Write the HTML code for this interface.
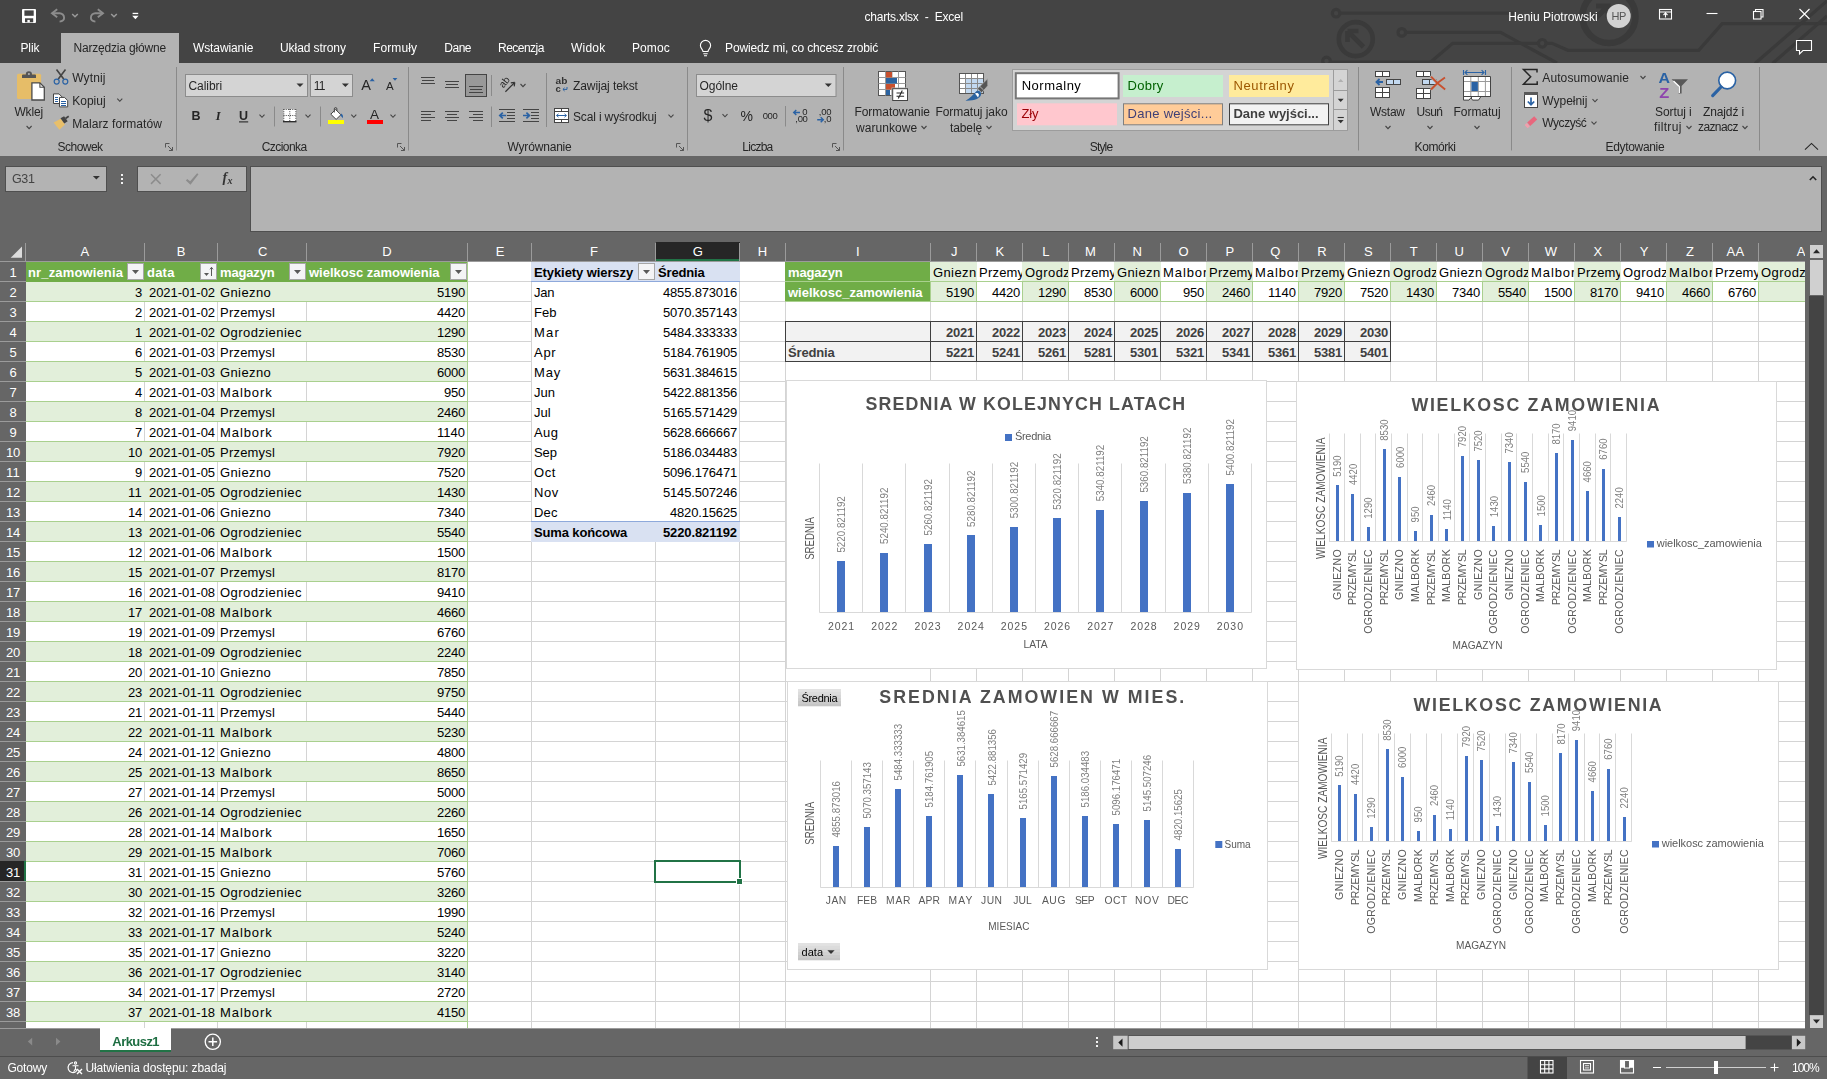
<!DOCTYPE html>
<html lang="pl"><head><meta charset="utf-8"><title>charts.xlsx - Excel</title>
<style>
html,body{margin:0;padding:0}
body{width:1827px;height:1079px;overflow:hidden;position:relative;background:#666;font-family:"Liberation Sans",sans-serif;font-size:12px}
div,span.t,svg{position:absolute;display:block}
span.t{white-space:pre}
svg{overflow:hidden}
.g{left:0;top:0;width:1827px;height:1079px;will-change:transform}
</style></head><body>
<div class="g" style="height:242px"><div style="left:0px;top:0px;width:1827px;height:63px;background:#444444;"></div><svg style="left:0px;top:0px;" width="1827" height="63" viewBox="0 0 1827 63"><g fill="none" stroke="#3a3a3a" stroke-width="3.2"><circle cx="1336.1" cy="13.2" r="3.8"/><path d="M1340 13.2H1514"/><circle cx="1355.8" cy="39.1" r="17" stroke-width="4.6"/><path d="M1347.500 31l16 16M1347.500 31v11M1347.500 31h11" stroke-width="4.600"/><circle cx="1401.8" cy="32.4" r="3.8"/><path d="M1405.800 32.400H1500.500L1557 63"/><path d="M1429 63.500L1452.700 43.400H1538.400"/><circle cx="1542.2" cy="43.3" r="3.8"/><path d="M1546 43.300H1552L1568 50.300H1698.700L1722.200 23.600H1827"/><circle cx="1326.500" cy="61" r="3.800"/><path d="M1330.500 62H1440"/><circle cx="1609" cy="16.500" r="26.500" stroke-width="6.500"/><path d="M1596 6h12v12M1608 6l-14 14" stroke-width="5"/><path d="M1755 63.500L1827 1"/><path d="M1772.500 63.500L1827 16" /></g></svg><div style="left:61px;top:33px;width:118px;height:30px;background:#b3b3b3;"></div><div style="left:0px;top:63px;width:1827px;height:93px;background:#b3b3b3;"></div><svg style="left:0px;top:0px;" width="1827" height="63" viewBox="0 0 1827 63"><rect x="22" y="9" width="14" height="14" rx="1" fill="#fff"/><rect x="24.4" y="10.400" width="9.300" height="5.400" fill="#444"/><rect x="25" y="18.300" width="8.200" height="4" fill="#444"/><rect x="27.400" y="19.900" width="2.400" height="2.400" fill="#fff"/><g fill="none" stroke="#8c8c8c" stroke-width="1.900"><path d="M52 13.200h7.600a4.500 4.500 0 0 1 4.500 4.500c0 2.200-1.700 3.600-4.500 3.900"/><path d="M57.200 9.200l-5.200 4 5.200 4"/><path d="M103 13.200h-7.600a4.500 4.500 0 0 0-4.500 4.500c0 2.200 1.700 3.600 4.500 3.900"/><path d="M97.800 9.200l5.200 4-5.200 4"/></g><path d="M72.2 14.0L75.0 16.8L77.8 14.0" fill="none" stroke="#9a9a9a" stroke-width="1.5"/><path d="M111.2 14.0L114.0 16.8L116.8 14.0" fill="none" stroke="#9a9a9a" stroke-width="1.5"/><rect x="132.600" y="12.800" width="5.600" height="1.300" fill="#fff"/><path d="M132.200 15.800h6.400l-3.200 3.500z" fill="#fff"/><g fill="none" stroke="#fff" stroke-width="1.1"><rect x="1659.5" y="9.5" width="12" height="9.5"/><path d="M1659.5 12h12M1665.5 17.5v-4M1663.5 15l2-2 2 2"/><path d="M1706.5 13.5h11"/><rect x="1753.5" y="11.5" width="7.5" height="7.5"/><path d="M1755.5 11.5v-2h7.5v7.5h-2"/><path d="M1799.5 9l10 10M1809.5 9l-10 10"/><path d="M1796.5 40.5h15v10h-8.5l-3.5 3.5v-3.5h-3z"/></g><g fill="none" stroke="#fff" stroke-width="1.1"><path d="M703 51.5c0-2-2.6-3-2.6-6a5.1 5.1 0 0 1 10.2 0c0 3-2.6 4-2.6 6z"/><path d="M703.3 53.7h4.4M704 55.7h3"/></g><circle cx="1618.7" cy="16" r="12" fill="#d2d2d2"/></svg><span class="t" style="left:1611.45px;top:9.30px;font-size:11px;line-height:14px;color:#555;letter-spacing:-0.390px;">HP</span><span class="t" style="left:864.50px;top:9.30px;font-size:12px;line-height:16px;color:#fff;letter-spacing:-0.231px;">charts.xlsx  -  Excel</span><span class="t" style="left:1508.30px;top:8.80px;font-size:12px;line-height:16px;color:#fff;">Heniu Piotrowski</span><span class="t" style="left:20.50px;top:40.00px;font-size:12px;line-height:16px;color:#fff;letter-spacing:-0.134px;">Plik</span><span class="t" style="left:73.40px;top:40.00px;font-size:12px;line-height:16px;color:#262626;letter-spacing:-0.174px;">Narzędzia główne</span><span class="t" style="left:193.00px;top:40.00px;font-size:12px;line-height:16px;color:#fff;letter-spacing:-0.105px;">Wstawianie</span><span class="t" style="left:280.00px;top:40.00px;font-size:12px;line-height:16px;color:#fff;letter-spacing:-0.066px;">Układ strony</span><span class="t" style="left:373.00px;top:40.00px;font-size:12px;line-height:16px;color:#fff;letter-spacing:0.095px;">Formuły</span><span class="t" style="left:444.30px;top:40.00px;font-size:12px;line-height:16px;color:#fff;letter-spacing:-0.497px;">Dane</span><span class="t" style="left:498.00px;top:40.00px;font-size:12px;line-height:16px;color:#fff;letter-spacing:-0.528px;">Recenzja</span><span class="t" style="left:571.00px;top:40.00px;font-size:12px;line-height:16px;color:#fff;letter-spacing:0.212px;">Widok</span><span class="t" style="left:632.00px;top:40.00px;font-size:12px;line-height:16px;color:#fff;letter-spacing:0.070px;">Pomoc</span><span class="t" style="left:725.00px;top:40.00px;font-size:12px;line-height:16px;color:#fff;letter-spacing:-0.126px;">Powiedz mi, co chcesz zrobić</span><svg style="left:0px;top:0px;" width="1827" height="160" viewBox="0 0 1827 160"><path d="M176.5 67V150.5" stroke="#8a8a8a" stroke-width="1"/><path d="M408.5 67V150.5" stroke="#8a8a8a" stroke-width="1"/><path d="M687.5 67V150.5" stroke="#8a8a8a" stroke-width="1"/><path d="M843.5 67V150.5" stroke="#8a8a8a" stroke-width="1"/><path d="M1358.5 67V150.5" stroke="#8a8a8a" stroke-width="1"/><path d="M1511.5 67V150.5" stroke="#8a8a8a" stroke-width="1"/><path d="M1759.5 67V150.5" stroke="#8a8a8a" stroke-width="1"/><path d="M165.5 147.5v-4h4" fill="none" stroke="#555" stroke-width="1"/><path d="M168 146l4.5 4.5M172.5 147v3.5h-3.5" fill="none" stroke="#555" stroke-width="1"/><path d="M397.5 147.5v-4h4" fill="none" stroke="#555" stroke-width="1"/><path d="M400 146l4.5 4.5M404.5 147v3.5h-3.5" fill="none" stroke="#555" stroke-width="1"/><path d="M676.5 147.5v-4h4" fill="none" stroke="#555" stroke-width="1"/><path d="M679 146l4.5 4.5M683.5 147v3.5h-3.5" fill="none" stroke="#555" stroke-width="1"/><path d="M832.5 147.5v-4h4" fill="none" stroke="#555" stroke-width="1"/><path d="M835 146l4.5 4.5M839.5 147v3.5h-3.5" fill="none" stroke="#555" stroke-width="1"/><rect x="17" y="73.7" width="24.1" height="25.3" rx="1.6" fill="#e6bd68"/><path d="M22 78v-2.600a1 1 0 0 1 1-1h2.800a3.100 3.100 0 0 1 6.200 0h3a1 1 0 0 1 1 1v2.600z" fill="#555"/><circle cx="28.9" cy="74" r="1.050" fill="#b3b3b3"/><path d="M31.900 82.900h8l4.400 4.400v12.700h-12.400z" fill="#fff" stroke="#4a4a4a" stroke-width="1.300"/><path d="M39.900 82.900v4.400h4.400" fill="none" stroke="#4a4a4a" stroke-width="1.100"/><path d="M26.6 126.0L29.1 128.6L31.6 126.0" fill="none" stroke="#444" stroke-width="1.1"/><path d="M56.5 69.5l7.2 9.6M65.5 69.5l-7.2 9.6" stroke="#444" stroke-width="1.6" fill="none"/><circle cx="56.7" cy="81.6" r="2.5" fill="none" stroke="#2a62a4" stroke-width="1.2"/><circle cx="65.3" cy="81.6" r="2.5" fill="none" stroke="#2a62a4" stroke-width="1.2"/><path d="M53.5 93.9h5.5l3 3v6.6h-8.5z" fill="#fff" stroke="#444" stroke-width="1"/><path d="M59.5 97.4h5l3.2 3.2v6.3h-8.2z" fill="#fff" stroke="#444" stroke-width="1"/><path d="M55 97.5h3M55 99.5h3M55 101.5h3M61 101.5h5M61 103.5h5M61 105.5h5" stroke="#2a62a4" stroke-width="1"/><path d="M117.3 98.7L119.8 101.3L122.3 98.7" fill="none" stroke="#444" stroke-width="1.1"/><path d="M53.6 122.6l7.2-3.8 4.2 5.6-5.6 5.4z" fill="#e8bf6a"/><path d="M60.5 118.2l3.6-2 3.6 5-3.4 2.4z" fill="#444"/><path d="M65 117.8l3.2-2.2 1 1.4-3.2 2.2z" fill="#444"/><rect x="185.5" y="74.5" width="122" height="22" fill="#d4d4d4" stroke="#8c8c8c"/><rect x="310.5" y="74.5" width="42" height="22" fill="#d4d4d4" stroke="#8c8c8c"/><path d="M296.5 83.5h7.0L300.0 87.1z" fill="#333"/><path d="M341.9 83.5h7.0L345.4 87.1z" fill="#333"/><path d="M369.6 81.2l2.6-3 2.6 3z" fill="#2a62a4"/><path d="M392.6 78l2.4 2.8 2.4-2.8z" fill="#2a62a4"/><path d="M239 121.9h9.2" stroke="#262626" stroke-width="1.1"/><path d="M259.5 114.7L262.0 117.3L264.5 114.7" fill="none" stroke="#444" stroke-width="1.1"/><path d="M305.5 114.7L308.0 117.3L310.5 114.7" fill="none" stroke="#444" stroke-width="1.1"/><path d="M351.3 114.7L353.8 117.3L356.3 114.7" fill="none" stroke="#444" stroke-width="1.1"/><path d="M390.5 114.7L393.0 117.3L395.5 114.7" fill="none" stroke="#444" stroke-width="1.1"/><path d="M274.5 106.5V126.5" stroke="#8a8a8a" stroke-width="1"/><path d="M320.5 106.5V126.5" stroke="#8a8a8a" stroke-width="1"/><rect x="283.5" y="109" width="12.5" height="12" fill="#fff"/><path d="M283.5 109.5h12.5M283.5 115.5h12.5M283.8 109v12M289.8 109v12M295.8 109v12" stroke="#444" stroke-width="1" stroke-dasharray="1 1.2" fill="none"/><path d="M283 121.7h13.5" stroke="#262626" stroke-width="1.3"/><rect x="328" y="120" width="16" height="4" fill="#ffff00"/><path d="M335.6 109.5l5.3 5.3-4.8 4.6-5.3-5.2z" fill="#fff" stroke="#444" stroke-width="1"/><path d="M334.3 112.5v-3.6a1.3 1.3 0 0 1 2.6 0v2" fill="none" stroke="#444" stroke-width="1"/><path d="M341.3 113.6c1.6 1 2 3 1.6 4.6c-.8-1.2-1.6-1.6-2.6-2.4z" fill="#2a62a4"/><rect x="367" y="120" width="16" height="4" fill="#ff0000"/><path d="M421 77.5H435" stroke="#444" stroke-width="1"/><path d="M422 80.5H434" stroke="#444" stroke-width="1"/><path d="M421 83.5H435" stroke="#444" stroke-width="1"/><path d="M445 81.5H459" stroke="#444" stroke-width="1"/><path d="M446 84.5H458" stroke="#444" stroke-width="1"/><path d="M445 87.5H459" stroke="#444" stroke-width="1"/><rect x="465.5" y="74.5" width="21" height="22" fill="#999" stroke="#444"/><path d="M469 86.5H483" stroke="#444" stroke-width="1"/><path d="M470 89.5H482" stroke="#444" stroke-width="1"/><path d="M469 92.5H483" stroke="#444" stroke-width="1"/><path d="M491.5 75V96" stroke="#8a8a8a" stroke-width="1"/><path d="M491.5 106.5V127" stroke="#8a8a8a" stroke-width="1"/><path d="M546.5 73V127" stroke="#8a8a8a" stroke-width="1"/><path d="M421 111.5H435" stroke="#444" stroke-width="1"/><path d="M445 111.5H459" stroke="#444" stroke-width="1"/><path d="M469 111.5H483" stroke="#444" stroke-width="1"/><path d="M421 114.5H431" stroke="#444" stroke-width="1"/><path d="M447 114.5H457" stroke="#444" stroke-width="1"/><path d="M473 114.5H483" stroke="#444" stroke-width="1"/><path d="M421 117.5H435" stroke="#444" stroke-width="1"/><path d="M445 117.5H459" stroke="#444" stroke-width="1"/><path d="M469 117.5H483" stroke="#444" stroke-width="1"/><path d="M421 120.5H431" stroke="#444" stroke-width="1"/><path d="M447 120.5H457" stroke="#444" stroke-width="1"/><path d="M473 120.5H483" stroke="#444" stroke-width="1"/><path d="M505.4 91.7L514.6 82.6M514.8 82.3l-4 .6M514.8 82.3l-.6 4" stroke="#333" stroke-width="1.2" fill="none"/><text x="0" y="0" transform="translate(503.5 88.6) rotate(-52)" font-size="10" fill="#262626" font-family="Liberation Sans,sans-serif">ab</text><path d="M520.5 84.0L523.0 86.6L525.5 84.0" fill="none" stroke="#444" stroke-width="1.1"/><path d="M499 109.5H515" stroke="#444" stroke-width="1"/><path d="M499 121.5H515" stroke="#444" stroke-width="1"/><path d="M507 112.5H515" stroke="#444" stroke-width="1"/><path d="M507 115.5H515" stroke="#444" stroke-width="1"/><path d="M507 118.5H515" stroke="#444" stroke-width="1"/><path d="M523 109.5H539" stroke="#444" stroke-width="1"/><path d="M523 121.5H539" stroke="#444" stroke-width="1"/><path d="M531 112.5H539" stroke="#444" stroke-width="1"/><path d="M531 115.5H539" stroke="#444" stroke-width="1"/><path d="M531 118.5H539" stroke="#444" stroke-width="1"/><path d="M499.6 115.5h6.6M502.8 112.6l-3 2.9 3 2.9" stroke="#2a62a4" stroke-width="1.7" fill="none"/><path d="M523 115.5h6.6M526.4 112.6l3 2.9-3 2.9" stroke="#2a62a4" stroke-width="1.7" fill="none"/><text x="555.6" y="84" font-size="9.5" font-weight="bold" fill="#333" font-family="Liberation Sans,sans-serif" textLength="11.8" lengthAdjust="spacingAndGlyphs">ab</text><text x="555.6" y="91.5" font-size="9.5" font-weight="bold" fill="#333" font-family="Liberation Sans,sans-serif">c</text><path d="M567 87v2.4h-4M564.6 87.8l-1.7 1.6 1.7 1.6" stroke="#2a62a4" stroke-width="1" fill="none"/><rect x="554.5" y="108.5" width="14" height="14" fill="#fff" stroke="#444"/><path d="M554.5 111.5h14M554.5 119.5h14M561.5 108.5v3M561.5 119.5v3" stroke="#444" fill="none"/><path d="M556.6 115.5h9.8M558.5 113.8l-1.9 1.7 1.9 1.7M564.5 113.8l1.9 1.7-1.9 1.7" stroke="#2a62a4" stroke-width="1" fill="none"/><path d="M668.5 114.7L671.0 117.3L673.5 114.7" fill="none" stroke="#444" stroke-width="1.1"/><rect x="696.5" y="74.5" width="139.5" height="22" fill="#d4d4d4" stroke="#8c8c8c"/><path d="M824.8 83.5h7.0L828.3 87.1z" fill="#333"/><path d="M722.5 114.2L725.0 116.8L727.5 114.2" fill="none" stroke="#444" stroke-width="1.1"/><path d="M785.5 106V126.5" stroke="#8a8a8a" stroke-width="1"/><path d="M800 112.500h-6.500M796.300 110l-2.600 2.500 2.600 2.500" stroke="#2a62a4" stroke-width="1.400" fill="none"/><path d="M817.200 119.700h6M820.700 117.200l2.600 2.500-2.600 2.500" stroke="#2a62a4" stroke-width="1.400" fill="none"/><rect x="878.5" y="71.5" width="27" height="24" fill="#fff" stroke="#555"/><path d="M878.5 77.5h27M878.5 83.5h27M878.5 89.5h27M885.5 71.5v24M892 71.5v24M898.5 71.5v24" stroke="#9a9a9a" stroke-width="1" fill="none"/><rect x="886" y="72" width="6" height="5.5" fill="#c8502e"/><rect x="886" y="78" width="11" height="5.5" fill="#2b63a0"/><rect x="886" y="84" width="9" height="5.5" fill="#c8502e"/><rect x="886" y="90" width="4" height="5" fill="#2b63a0"/><rect x="891.5" y="87.5" width="17" height="14" fill="#b3b3b3"/><rect x="892.7" y="88.7" width="14.8" height="11.8" fill="#fff" stroke="#444"/><path d="M896.5 93h7.6M896.5 96.2h7.6M902.3 90.6l-4 8" stroke="#262626" stroke-width="1.1" fill="none"/><path d="M921.5 126.0L924.0 128.6L926.5 126.0" fill="none" stroke="#444" stroke-width="1.1"/><path d="M986.5 126.0L989.0 128.6L991.5 126.0" fill="none" stroke="#444" stroke-width="1.1"/><rect x="959.5" y="73.5" width="24" height="20" fill="#fff" stroke="#555"/><rect x="966" y="79" width="17.5" height="14.5" fill="#c3d9f0"/><path d="M959.5 78.5h24M959.5 83.5h24M959.5 88.5h24M965.5 73.5v20M971.5 73.5v20M977.5 73.5v20" stroke="#8a8a8a" stroke-width="1" fill="none"/><rect x="959.5" y="73.5" width="24" height="20" fill="none" stroke="#555"/><path d="M977.4 88.8L987.8 78.6v7.2l-6.200 7z" fill="#555" stroke="#b3b3b3" stroke-width=".8"/><path d="M979.800 86.400l3.800 3.600" stroke="#b3b3b3" stroke-width="1"/><path d="M976.3 91.200c2.600-1.200 5.200.8 4.800 3.400c-.6 3.800-6.200 6.400-15.600 6.200 4.600-2.400 7.200-6 10.800-9.600z" fill="#2b63a0"/><path d="M975 93.600c1.400-1.200 3.600-.6 4 1.200l-.9 2.600z" fill="#fff"/><rect x="1012.5" y="69.5" width="335" height="61" fill="#d4d4d4" stroke="#9c9c9c"/><rect x="1015.8" y="73.2" width="102.8" height="25.2" fill="#fff" stroke="#767676" stroke-width="2"/><rect x="1123" y="75" width="100" height="22" fill="#c6efce"/><rect x="1229" y="75" width="100" height="22" fill="#ffeb9c"/><rect x="1017" y="103.3" width="100" height="22" fill="#ffc7ce"/><rect x="1123.5" y="103.8" width="99" height="21" fill="#ffcc99" stroke="#7f7f7f"/><rect x="1229.5" y="103.8" width="99" height="21" fill="#f2f2f2" stroke="#3f3f3f"/><path d="M1333.5 69.5v61M1333.5 90.5h14M1333.5 109.5h14" stroke="#9c9c9c" fill="none"/><path d="M1338 82l2.7-3 2.7 3z" fill="#b0b0b0"/><path d="M1337.7 98.8h6L1340.7 102.0z" fill="#333"/><path d="M1337.6 117.5h6.2" stroke="#333" stroke-width="1.1"/><path d="M1337.7 120.0h6L1340.7 123.2z" fill="#333"/><rect x="1375.5" y="71.5" width="14" height="5" fill="#fff" stroke="#444" stroke-width="1"/><path d="M1382.5 71.5v5" stroke="#444"/><rect x="1375.5" y="87.5" width="14" height="10" fill="#fff" stroke="#444" stroke-width="1"/><path d="M1382.5 87.5v10" stroke="#444"/><path d="M1375.5 92.5h14" stroke="#444"/><rect x="1386.5" y="79.5" width="14" height="5" fill="#c3d9f0" stroke="#444" stroke-width="1"/><path d="M1393.5 79.5v5" stroke="#444"/><path d="M1383 82h-6.600M1379.600 79l-3.100 3 3.100 3" stroke="#2a62a4" stroke-width="1.900" fill="none"/><rect x="1416.5" y="71.5" width="14" height="5" fill="#fff" stroke="#444" stroke-width="1"/><path d="M1423.5 71.5v5" stroke="#444"/><rect x="1416.5" y="88.5" width="14" height="10" fill="#fff" stroke="#444" stroke-width="1"/><path d="M1423.5 88.5v10" stroke="#444"/><path d="M1416.5 93.5h14" stroke="#444"/><rect x="1422.5" y="79.5" width="14" height="5" fill="#c3d9f0" stroke="#444" stroke-width="1"/><path d="M1429.5 79.5v5" stroke="#444"/><path d="M1430.400 76l15.600 14.600M1431 90.400l14.600-13.400" stroke="#b3b3b3" stroke-width="3.600" fill="none"/><path d="M1431 76.700c4 4.500 9 9 14.200 12.800M1445 77.500c-5 3-10 7.500-14 12" stroke="#c8502e" stroke-width="2" fill="none"/><path d="M1463.500 76.500h27v20h-9.500l-2.500 3.600h-6l-1.500-2.400-2 2.400h-5.500z" fill="#fff" stroke="#444"/><path d="M1463.500 96.500h27M1471.500 96.500v2" stroke="#444" fill="none"/><path d="M1464 81.500h26M1464 91.500h26M1470.800 77v19M1478.300 77v19M1485.400 77v19" stroke="#9a9a9a" stroke-width="1" fill="none"/><rect x="1471.400" y="82" width="6.500" height="9" fill="#2a62a4"/><path d="M1465 72.500h19M1463.500 70v5M1485.500 70v5M1467.400 70.200l-2.400 2.300 2.400 2.300M1481.600 70.200l2.400 2.300-2.400 2.300" stroke="#2a62a4" stroke-width="1.100" fill="none"/><path d="M1385.5 126.0L1388.0 128.6L1390.5 126.0" fill="none" stroke="#444" stroke-width="1.1"/><path d="M1427.5 126.0L1430.0 128.6L1432.5 126.0" fill="none" stroke="#444" stroke-width="1.1"/><path d="M1474.5 126.0L1477.0 128.6L1479.5 126.0" fill="none" stroke="#444" stroke-width="1.1"/><path d="M1537 72.5v-3h-13.5l7.2 7.3-7.2 7.4h13.7v-3" fill="none" stroke="#262626" stroke-width="1.5"/><path d="M1640.5 76.0L1643.0 78.6L1645.5 76.0" fill="none" stroke="#444" stroke-width="1.1"/><path d="M1592.5 99.2L1595.0 101.8L1597.5 99.2" fill="none" stroke="#444" stroke-width="1.1"/><path d="M1591.5 121.7L1594.0 124.3L1596.5 121.7" fill="none" stroke="#444" stroke-width="1.1"/><rect x="1524.5" y="92.5" width="13" height="15" fill="#fff" stroke="#444"/><rect x="1524" y="92" width="14" height="3" fill="#595959"/><path d="M1531 97.5v7M1527.8 101.5l3.2 3.2 3.2-3.2" stroke="#2a62a4" stroke-width="1.7" fill="none"/><path d="M1527.2 122.6l7-6.4 3 3.3-7 6.4z" fill="#e8677d"/><path d="M1524.6 125l2.2-2 3 3.3-2.2 2z" fill="#f0a0ad"/><text x="1658.6" y="83.3" font-size="15.5" font-weight="bold" fill="#2a62a4" font-family="Liberation Sans,sans-serif" textLength="11.5" lengthAdjust="spacingAndGlyphs">A</text><text x="1659.3" y="97.6" font-size="15.5" font-weight="bold" fill="#8e44ad" font-family="Liberation Sans,sans-serif" textLength="10" lengthAdjust="spacingAndGlyphs">Z</text><path d="M1671.6 79.3h16.4l-6.4 6.8v7.4h-3v-7.4z" fill="#595959"/><path d="M1673.5 81l5.8 5.6v6.4" fill="none" stroke="#fff" stroke-width="1.3"/><circle cx="1727.2" cy="80.5" r="8.4" fill="#fff" stroke="#2a62a4" stroke-width="1.6"/><path d="M1721 87l-8.3 8.6" stroke="#2a62a4" stroke-width="3.2" stroke-linecap="round"/><path d="M1686.5 126.0L1689.0 128.6L1691.5 126.0" fill="none" stroke="#444" stroke-width="1.1"/><path d="M1742.5 126.0L1745.0 128.6L1747.5 126.0" fill="none" stroke="#444" stroke-width="1.1"/><path d="M1805 149.6l6.5-6.2 6.5 6.2" fill="none" stroke="#262626" stroke-width="1.1"/></svg><span class="t" style="left:14.40px;top:103.70px;font-size:12px;line-height:16px;color:#262626;letter-spacing:-0.146px;">Wklej</span><span class="t" style="left:72.20px;top:69.60px;font-size:12px;line-height:16px;color:#262626;letter-spacing:0.140px;">Wytnij</span><span class="t" style="left:72.20px;top:92.60px;font-size:12px;line-height:16px;color:#262626;letter-spacing:0.007px;">Kopiuj</span><span class="t" style="left:72.20px;top:115.60px;font-size:12px;line-height:16px;color:#262626;letter-spacing:0.074px;">Malarz formatów</span><span class="t" style="left:57.50px;top:139.00px;font-size:12px;line-height:16px;color:#262626;letter-spacing:-0.513px;">Schowek</span><span class="t" style="left:261.70px;top:139.00px;font-size:12px;line-height:16px;color:#262626;letter-spacing:-0.557px;">Czcionka</span><span class="t" style="left:507.50px;top:139.00px;font-size:12px;line-height:16px;color:#262626;letter-spacing:-0.182px;">Wyrównanie</span><span class="t" style="left:742.30px;top:139.00px;font-size:12px;line-height:16px;color:#262626;letter-spacing:-0.748px;">Liczba</span><span class="t" style="left:1089.70px;top:139.00px;font-size:12px;line-height:16px;color:#262626;letter-spacing:-0.816px;">Style</span><span class="t" style="left:1414.60px;top:139.00px;font-size:12px;line-height:16px;color:#262626;letter-spacing:-0.430px;">Komórki</span><span class="t" style="left:1605.50px;top:139.00px;font-size:12px;line-height:16px;color:#262626;letter-spacing:-0.324px;">Edytowanie</span><span class="t" style="left:188.50px;top:77.50px;font-size:12px;line-height:16px;color:#262626;letter-spacing:-0.073px;">Calibri</span><span class="t" style="left:313.70px;top:77.50px;font-size:12px;line-height:16px;color:#262626;letter-spacing:-0.729px;">11</span><span class="t" style="left:361.30px;top:76.30px;font-size:14.5px;line-height:19px;color:#262626;letter-spacing:0.129px;">A</span><span class="t" style="left:386.00px;top:79.30px;font-size:11.5px;line-height:15px;color:#262626;letter-spacing:0.129px;">A</span><span class="t" style="left:191.60px;top:107.50px;font-size:12.5px;line-height:16px;color:#262626;letter-spacing:-1.027px;font-weight:bold;">B</span><span class="t" style="left:215.80px;top:107.50px;font-size:12.5px;line-height:16px;color:#262626;letter-spacing:1.527px;font-weight:bold;font-style:italic;font-family:'Liberation Serif',serif;">I</span><span class="t" style="left:239.00px;top:107.50px;font-size:12.5px;line-height:16px;color:#262626;letter-spacing:-0.027px;font-weight:bold;">U</span><span class="t" style="left:370.00px;top:105.50px;font-size:13.5px;line-height:18px;color:#262626;letter-spacing:0.995px;">A</span><span class="t" style="left:573.00px;top:78.00px;font-size:12px;line-height:16px;color:#262626;letter-spacing:-0.094px;">Zawijaj tekst</span><span class="t" style="left:573.00px;top:108.80px;font-size:12px;line-height:16px;color:#262626;letter-spacing:-0.152px;">Scal i wyśrodkuj</span><span class="t" style="left:699.50px;top:77.70px;font-size:12px;line-height:16px;color:#262626;letter-spacing:-0.033px;">Ogólne</span><span class="t" style="left:703.60px;top:105.00px;font-size:16px;line-height:21px;color:#262626;letter-spacing:-0.899px;">$</span><span class="t" style="left:740.50px;top:107.20px;font-size:14px;line-height:18px;color:#262626;letter-spacing:-0.248px;">%</span><span class="t" style="left:762.80px;top:109.50px;font-size:9.5px;line-height:12px;color:#262626;letter-spacing:-0.483px;">000</span><span class="t" style="left:802.20px;top:105.90px;font-size:9.5px;line-height:12px;color:#262626;letter-spacing:-0.083px;">0</span><span class="t" style="left:795.30px;top:112.90px;font-size:9.5px;line-height:12px;color:#262626;letter-spacing:-0.302px;">,00</span><span class="t" style="left:818.80px;top:105.90px;font-size:9.5px;line-height:12px;color:#262626;letter-spacing:-0.269px;">,00</span><span class="t" style="left:823.80px;top:112.90px;font-size:9.5px;line-height:12px;color:#262626;letter-spacing:-0.261px;">,0</span><span class="t" style="left:854.40px;top:103.50px;font-size:12px;line-height:16px;color:#262626;letter-spacing:-0.036px;">Formatowanie</span><span class="t" style="left:856.00px;top:119.60px;font-size:12px;line-height:16px;color:#262626;letter-spacing:0.067px;">warunkowe</span><span class="t" style="left:935.40px;top:103.50px;font-size:12px;line-height:16px;color:#262626;letter-spacing:-0.038px;">Formatuj jako</span><span class="t" style="left:950.00px;top:119.60px;font-size:12px;line-height:16px;color:#262626;letter-spacing:-0.116px;">tabelę</span><span class="t" style="left:1021.70px;top:77.00px;font-size:13px;line-height:17px;color:#000;letter-spacing:0.509px;">Normalny</span><span class="t" style="left:1127.50px;top:77.00px;font-size:13px;line-height:17px;color:#006100;letter-spacing:0.264px;">Dobry</span><span class="t" style="left:1233.50px;top:77.00px;font-size:13px;line-height:17px;color:#9c5700;letter-spacing:0.596px;">Neutralny</span><span class="t" style="left:1021.50px;top:105.00px;font-size:13px;line-height:17px;color:#9c0006;letter-spacing:-0.110px;">Zły</span><span class="t" style="left:1127.50px;top:105.00px;font-size:13px;line-height:17px;color:#3f3f76;letter-spacing:0.291px;">Dane wejści...</span><span class="t" style="left:1233.50px;top:105.00px;font-size:13px;line-height:17px;color:#3f3f3f;letter-spacing:-0.019px;font-weight:bold;">Dane wyjści...</span><span class="t" style="left:1370.00px;top:103.70px;font-size:12px;line-height:16px;color:#262626;letter-spacing:-0.260px;">Wstaw</span><span class="t" style="left:1416.60px;top:103.70px;font-size:12px;line-height:16px;color:#262626;letter-spacing:-0.553px;">Usuń</span><span class="t" style="left:1453.60px;top:103.70px;font-size:12px;line-height:16px;color:#262626;letter-spacing:-0.056px;">Formatuj</span><span class="t" style="left:1542.30px;top:69.60px;font-size:12px;line-height:16px;color:#262626;letter-spacing:0.101px;">Autosumowanie</span><span class="t" style="left:1542.30px;top:92.50px;font-size:12px;line-height:16px;color:#262626;letter-spacing:-0.018px;">Wypełnij</span><span class="t" style="left:1542.30px;top:115.00px;font-size:12px;line-height:16px;color:#262626;letter-spacing:-0.460px;">Wyczyść</span><span class="t" style="left:1655.00px;top:103.70px;font-size:12px;line-height:16px;color:#262626;letter-spacing:-0.081px;">Sortuj i</span><span class="t" style="left:1654.00px;top:119.20px;font-size:12px;line-height:16px;color:#262626;letter-spacing:0.338px;">filtruj</span><span class="t" style="left:1703.00px;top:103.70px;font-size:12px;line-height:16px;color:#262626;letter-spacing:-0.127px;">Znajdź i</span><span class="t" style="left:1698.00px;top:119.20px;font-size:12px;line-height:16px;color:#262626;letter-spacing:-0.603px;">zaznacz</span><div style="left:0px;top:156px;width:1827px;height:86px;background:#666666;"></div><svg style="left:0px;top:160px;" width="1827" height="80" viewBox="0 160 1827 80"><rect x="5.5" y="166.5" width="101" height="25" fill="#b3b3b3" stroke="#4f4f4f"/><rect x="137.5" y="166.5" width="109" height="25" fill="#b3b3b3" stroke="#4f4f4f"/><rect x="250.5" y="166.5" width="1571" height="65" fill="#b3b3b3" stroke="#4f4f4f"/><path d="M92.9 176.0h7L96.4 179.6z" fill="#333"/><rect x="121" y="174" width="2" height="2" fill="#f2f2f2"/><rect x="121" y="178" width="2" height="2" fill="#f2f2f2"/><rect x="121" y="182" width="2" height="2" fill="#f2f2f2"/><path d="M151 174.3l9.6 9.6M160.6 174.3l-9.6 9.6" stroke="#8c8c8c" stroke-width="1.5" fill="none"/><path d="M185.900 180.400l1.300-1.500 2.900 2.400 7-8 1.400 1-8 10.500z" fill="#8c8c8c"/><path d="M1809.8 180l3.2-3.2 3.2 3.2" stroke="#262626" stroke-width="1.6" fill="none"/></svg><span class="t" style="left:12.00px;top:171.40px;font-size:12.5px;line-height:16px;color:#444;letter-spacing:-0.376px;">G31</span><span class="t" style="left:222.60px;top:169.20px;font-size:14px;line-height:18px;color:#333;letter-spacing:0.838px;font-weight:bold;font-style:italic;font-family:'Liberation Serif',serif;">f</span><span class="t" style="left:227.60px;top:174.20px;font-size:10px;line-height:13px;color:#333;letter-spacing:-0.062px;font-weight:bold;font-style:italic;font-family:'Liberation Serif',serif;">x</span></div><div style="left:0px;top:242px;width:1827px;height:20px;background:#666666;"></div><div style="left:0px;top:261px;width:1805px;height:1px;background:#9b9b9b;"></div><div style="left:656px;top:242px;width:84px;height:18px;background:#262626;"></div><div style="left:656px;top:259px;width:84px;height:2px;background:#217346;"></div><svg style="left:0px;top:242px;" width="1806" height="20" viewBox="0 242 1806 20"><path d="M22 246.5v11.3h-11.3z" fill="#dcdcdc"/><path d="M25.5 243v18" stroke="#9b9b9b"/><path d="M144.5 243v18" stroke="#9b9b9b"/><path d="M217.5 243v18" stroke="#9b9b9b"/><path d="M306.5 243v18" stroke="#9b9b9b"/><path d="M467.5 243v18" stroke="#9b9b9b"/><path d="M531.5 243v18" stroke="#9b9b9b"/><path d="M655.5 243v18" stroke="#9b9b9b"/><path d="M739.5 243v18" stroke="#9b9b9b"/><path d="M785.5 243v18" stroke="#9b9b9b"/><path d="M930.5 243v18" stroke="#9b9b9b"/><path d="M976.5 243v18" stroke="#9b9b9b"/><path d="M1022.5 243v18" stroke="#9b9b9b"/><path d="M1068.5 243v18" stroke="#9b9b9b"/><path d="M1114.5 243v18" stroke="#9b9b9b"/><path d="M1160.5 243v18" stroke="#9b9b9b"/><path d="M1206.5 243v18" stroke="#9b9b9b"/><path d="M1252.5 243v18" stroke="#9b9b9b"/><path d="M1298.5 243v18" stroke="#9b9b9b"/><path d="M1344.5 243v18" stroke="#9b9b9b"/><path d="M1390.5 243v18" stroke="#9b9b9b"/><path d="M1436.5 243v18" stroke="#9b9b9b"/><path d="M1482.5 243v18" stroke="#9b9b9b"/><path d="M1528.5 243v18" stroke="#9b9b9b"/><path d="M1574.5 243v18" stroke="#9b9b9b"/><path d="M1620.5 243v18" stroke="#9b9b9b"/><path d="M1666.5 243v18" stroke="#9b9b9b"/><path d="M1712.5 243v18" stroke="#9b9b9b"/><path d="M1758.5 243v18" stroke="#9b9b9b"/></svg><span class="t" style="left:80.54px;top:242.50px;font-size:13px;line-height:17px;color:#fff;letter-spacing:0.240px;">A</span><span class="t" style="left:176.81px;top:242.50px;font-size:13px;line-height:17px;color:#fff;letter-spacing:-0.294px;">B</span><span class="t" style="left:257.89px;top:242.50px;font-size:13px;line-height:17px;color:#fff;letter-spacing:-1.177px;">C</span><span class="t" style="left:382.26px;top:242.50px;font-size:13px;line-height:17px;color:#fff;letter-spacing:0.087px;">D</span><span class="t" style="left:495.74px;top:242.50px;font-size:13px;line-height:17px;color:#fff;letter-spacing:-1.151px;">E</span><span class="t" style="left:589.96px;top:242.50px;font-size:13px;line-height:17px;color:#fff;letter-spacing:-0.865px;">F</span><span class="t" style="left:692.64px;top:242.50px;font-size:13px;line-height:17px;color:#fff;letter-spacing:-0.396px;">G</span><span class="t" style="left:757.70px;top:242.50px;font-size:13px;line-height:17px;color:#fff;letter-spacing:0.207px;">H</span><span class="t" style="left:856.06px;top:242.50px;font-size:13px;line-height:17px;color:#fff;letter-spacing:0.268px;">I</span><span class="t" style="left:951.04px;top:242.50px;font-size:13px;line-height:17px;color:#fff;letter-spacing:-1.590px;">J</span><span class="t" style="left:995.50px;top:242.50px;font-size:13px;line-height:17px;color:#fff;letter-spacing:-0.670px;">K</span><span class="t" style="left:1042.26px;top:242.50px;font-size:13px;line-height:17px;color:#fff;letter-spacing:-0.756px;">L</span><span class="t" style="left:1084.92px;top:242.50px;font-size:13px;line-height:17px;color:#fff;letter-spacing:2.338px;">M</span><span class="t" style="left:1132.53px;top:242.50px;font-size:13px;line-height:17px;color:#fff;letter-spacing:0.553px;">N</span><span class="t" style="left:1178.40px;top:242.50px;font-size:13px;line-height:17px;color:#fff;letter-spacing:0.085px;">O</span><span class="t" style="left:1225.52px;top:242.50px;font-size:13px;line-height:17px;color:#fff;letter-spacing:-0.715px;">P</span><span class="t" style="left:1270.32px;top:242.50px;font-size:13px;line-height:17px;color:#fff;letter-spacing:0.251px;">Q</span><span class="t" style="left:1317.32px;top:242.50px;font-size:13px;line-height:17px;color:#fff;letter-spacing:-1.026px;">R</span><span class="t" style="left:1363.96px;top:242.50px;font-size:13px;line-height:17px;color:#fff;letter-spacing:-1.595px;">S</span><span class="t" style="left:1409.75px;top:242.50px;font-size:13px;line-height:17px;color:#fff;letter-spacing:-0.436px;">T</span><span class="t" style="left:1454.56px;top:242.50px;font-size:13px;line-height:17px;color:#fff;letter-spacing:0.493px;">U</span><span class="t" style="left:1501.13px;top:242.50px;font-size:13px;line-height:17px;color:#fff;letter-spacing:0.067px;">V</span><span class="t" style="left:1544.65px;top:242.50px;font-size:13px;line-height:17px;color:#fff;letter-spacing:1.431px;">W</span><span class="t" style="left:1593.50px;top:242.50px;font-size:13px;line-height:17px;color:#fff;letter-spacing:-0.677px;">X</span><span class="t" style="left:1639.75px;top:242.50px;font-size:13px;line-height:17px;color:#fff;letter-spacing:-1.166px;">Y</span><span class="t" style="left:1685.89px;top:242.50px;font-size:13px;line-height:17px;color:#fff;letter-spacing:-0.730px;">Z</span><span class="t" style="left:1726.59px;top:242.50px;font-size:13px;line-height:17px;color:#fff;letter-spacing:0.240px;">AA</span><div style="left:1759px;top:242px;width:47px;height:19px;overflow:hidden"><span class="t" style="left:37.86px;top:0.50px;font-size:13px;line-height:17px;color:#fff;letter-spacing:-0.027px;">AB</span></div><div style="left:0;top:262px;width:26px;height:766px;overflow:hidden;background:#666666"><div style="left:0px;top:19px;width:26px;height:1px;background:#9b9b9b;"></div><span class="t" style="left:9.50px;top:2.00px;font-size:13px;line-height:17px;color:#fff;letter-spacing:-0.230px;">1</span><div style="left:0px;top:39px;width:26px;height:1px;background:#9b9b9b;"></div><span class="t" style="left:9.50px;top:22.00px;font-size:13px;line-height:17px;color:#fff;letter-spacing:-0.230px;">2</span><div style="left:0px;top:59px;width:26px;height:1px;background:#9b9b9b;"></div><span class="t" style="left:9.50px;top:42.00px;font-size:13px;line-height:17px;color:#fff;letter-spacing:-0.230px;">3</span><div style="left:0px;top:79px;width:26px;height:1px;background:#9b9b9b;"></div><span class="t" style="left:9.50px;top:62.00px;font-size:13px;line-height:17px;color:#fff;letter-spacing:-0.230px;">4</span><div style="left:0px;top:99px;width:26px;height:1px;background:#9b9b9b;"></div><span class="t" style="left:9.50px;top:82.00px;font-size:13px;line-height:17px;color:#fff;letter-spacing:-0.230px;">5</span><div style="left:0px;top:119px;width:26px;height:1px;background:#9b9b9b;"></div><span class="t" style="left:9.50px;top:102.00px;font-size:13px;line-height:17px;color:#fff;letter-spacing:-0.230px;">6</span><div style="left:0px;top:139px;width:26px;height:1px;background:#9b9b9b;"></div><span class="t" style="left:9.50px;top:122.00px;font-size:13px;line-height:17px;color:#fff;letter-spacing:-0.230px;">7</span><div style="left:0px;top:159px;width:26px;height:1px;background:#9b9b9b;"></div><span class="t" style="left:9.50px;top:142.00px;font-size:13px;line-height:17px;color:#fff;letter-spacing:-0.230px;">8</span><div style="left:0px;top:179px;width:26px;height:1px;background:#9b9b9b;"></div><span class="t" style="left:9.50px;top:162.00px;font-size:13px;line-height:17px;color:#fff;letter-spacing:-0.230px;">9</span><div style="left:0px;top:199px;width:26px;height:1px;background:#9b9b9b;"></div><span class="t" style="left:6.00px;top:182.00px;font-size:13px;line-height:17px;color:#fff;letter-spacing:-0.230px;">10</span><div style="left:0px;top:219px;width:26px;height:1px;background:#9b9b9b;"></div><span class="t" style="left:6.00px;top:202.00px;font-size:13px;line-height:17px;color:#fff;letter-spacing:0.252px;">11</span><div style="left:0px;top:239px;width:26px;height:1px;background:#9b9b9b;"></div><span class="t" style="left:6.00px;top:222.00px;font-size:13px;line-height:17px;color:#fff;letter-spacing:-0.230px;">12</span><div style="left:0px;top:259px;width:26px;height:1px;background:#9b9b9b;"></div><span class="t" style="left:6.00px;top:242.00px;font-size:13px;line-height:17px;color:#fff;letter-spacing:-0.230px;">13</span><div style="left:0px;top:279px;width:26px;height:1px;background:#9b9b9b;"></div><span class="t" style="left:6.00px;top:262.00px;font-size:13px;line-height:17px;color:#fff;letter-spacing:-0.230px;">14</span><div style="left:0px;top:299px;width:26px;height:1px;background:#9b9b9b;"></div><span class="t" style="left:6.00px;top:282.00px;font-size:13px;line-height:17px;color:#fff;letter-spacing:-0.230px;">15</span><div style="left:0px;top:319px;width:26px;height:1px;background:#9b9b9b;"></div><span class="t" style="left:6.00px;top:302.00px;font-size:13px;line-height:17px;color:#fff;letter-spacing:-0.230px;">16</span><div style="left:0px;top:339px;width:26px;height:1px;background:#9b9b9b;"></div><span class="t" style="left:6.00px;top:322.00px;font-size:13px;line-height:17px;color:#fff;letter-spacing:-0.230px;">17</span><div style="left:0px;top:359px;width:26px;height:1px;background:#9b9b9b;"></div><span class="t" style="left:6.00px;top:342.00px;font-size:13px;line-height:17px;color:#fff;letter-spacing:-0.230px;">18</span><div style="left:0px;top:379px;width:26px;height:1px;background:#9b9b9b;"></div><span class="t" style="left:6.00px;top:362.00px;font-size:13px;line-height:17px;color:#fff;letter-spacing:-0.230px;">19</span><div style="left:0px;top:399px;width:26px;height:1px;background:#9b9b9b;"></div><span class="t" style="left:6.00px;top:382.00px;font-size:13px;line-height:17px;color:#fff;letter-spacing:-0.230px;">20</span><div style="left:0px;top:419px;width:26px;height:1px;background:#9b9b9b;"></div><span class="t" style="left:6.00px;top:402.00px;font-size:13px;line-height:17px;color:#fff;letter-spacing:-0.230px;">21</span><div style="left:0px;top:439px;width:26px;height:1px;background:#9b9b9b;"></div><span class="t" style="left:6.00px;top:422.00px;font-size:13px;line-height:17px;color:#fff;letter-spacing:-0.230px;">22</span><div style="left:0px;top:459px;width:26px;height:1px;background:#9b9b9b;"></div><span class="t" style="left:6.00px;top:442.00px;font-size:13px;line-height:17px;color:#fff;letter-spacing:-0.230px;">23</span><div style="left:0px;top:479px;width:26px;height:1px;background:#9b9b9b;"></div><span class="t" style="left:6.00px;top:462.00px;font-size:13px;line-height:17px;color:#fff;letter-spacing:-0.230px;">24</span><div style="left:0px;top:499px;width:26px;height:1px;background:#9b9b9b;"></div><span class="t" style="left:6.00px;top:482.00px;font-size:13px;line-height:17px;color:#fff;letter-spacing:-0.230px;">25</span><div style="left:0px;top:519px;width:26px;height:1px;background:#9b9b9b;"></div><span class="t" style="left:6.00px;top:502.00px;font-size:13px;line-height:17px;color:#fff;letter-spacing:-0.230px;">26</span><div style="left:0px;top:539px;width:26px;height:1px;background:#9b9b9b;"></div><span class="t" style="left:6.00px;top:522.00px;font-size:13px;line-height:17px;color:#fff;letter-spacing:-0.230px;">27</span><div style="left:0px;top:559px;width:26px;height:1px;background:#9b9b9b;"></div><span class="t" style="left:6.00px;top:542.00px;font-size:13px;line-height:17px;color:#fff;letter-spacing:-0.230px;">28</span><div style="left:0px;top:579px;width:26px;height:1px;background:#9b9b9b;"></div><span class="t" style="left:6.00px;top:562.00px;font-size:13px;line-height:17px;color:#fff;letter-spacing:-0.230px;">29</span><div style="left:0px;top:599px;width:26px;height:1px;background:#9b9b9b;"></div><span class="t" style="left:6.00px;top:582.00px;font-size:13px;line-height:17px;color:#fff;letter-spacing:-0.230px;">30</span><div style="left:0px;top:599px;width:24px;height:20px;background:#262626;"></div><div style="left:24px;top:599px;width:2px;height:20px;background:#217346;"></div><div style="left:0px;top:619px;width:26px;height:1px;background:#9b9b9b;"></div><span class="t" style="left:6.00px;top:602.00px;font-size:13px;line-height:17px;color:#fff;letter-spacing:-0.230px;">31</span><div style="left:0px;top:639px;width:26px;height:1px;background:#9b9b9b;"></div><span class="t" style="left:6.00px;top:622.00px;font-size:13px;line-height:17px;color:#fff;letter-spacing:-0.230px;">32</span><div style="left:0px;top:659px;width:26px;height:1px;background:#9b9b9b;"></div><span class="t" style="left:6.00px;top:642.00px;font-size:13px;line-height:17px;color:#fff;letter-spacing:-0.230px;">33</span><div style="left:0px;top:679px;width:26px;height:1px;background:#9b9b9b;"></div><span class="t" style="left:6.00px;top:662.00px;font-size:13px;line-height:17px;color:#fff;letter-spacing:-0.230px;">34</span><div style="left:0px;top:699px;width:26px;height:1px;background:#9b9b9b;"></div><span class="t" style="left:6.00px;top:682.00px;font-size:13px;line-height:17px;color:#fff;letter-spacing:-0.230px;">35</span><div style="left:0px;top:719px;width:26px;height:1px;background:#9b9b9b;"></div><span class="t" style="left:6.00px;top:702.00px;font-size:13px;line-height:17px;color:#fff;letter-spacing:-0.230px;">36</span><div style="left:0px;top:739px;width:26px;height:1px;background:#9b9b9b;"></div><span class="t" style="left:6.00px;top:722.00px;font-size:13px;line-height:17px;color:#fff;letter-spacing:-0.230px;">37</span><div style="left:0px;top:759px;width:26px;height:1px;background:#9b9b9b;"></div><span class="t" style="left:6.00px;top:742.00px;font-size:13px;line-height:17px;color:#fff;letter-spacing:-0.230px;">38</span><div style="left:0px;top:779px;width:26px;height:1px;background:#9b9b9b;"></div><span class="t" style="left:6.00px;top:762.00px;font-size:13px;line-height:17px;color:#fff;letter-spacing:-0.230px;">39</span></div><div style="left:26px;top:262px;width:1779px;height:766px;overflow:hidden;background:#fff"><svg style="left:0;top:0" width="1780" height="766"><g stroke="#d4d4d4" stroke-width="1" fill="none"><path d="M0 19.5H1780"/><path d="M0 39.5H1780"/><path d="M0 59.5H1780"/><path d="M0 79.5H1780"/><path d="M0 99.5H1780"/><path d="M0 119.5H1780"/><path d="M0 139.5H1780"/><path d="M0 159.5H1780"/><path d="M0 179.5H1780"/><path d="M0 199.5H1780"/><path d="M0 219.5H1780"/><path d="M0 239.5H1780"/><path d="M0 259.5H1780"/><path d="M0 279.5H1780"/><path d="M0 299.5H1780"/><path d="M0 319.5H1780"/><path d="M0 339.5H1780"/><path d="M0 359.5H1780"/><path d="M0 379.5H1780"/><path d="M0 399.5H1780"/><path d="M0 419.5H1780"/><path d="M0 439.5H1780"/><path d="M0 459.5H1780"/><path d="M0 479.5H1780"/><path d="M0 499.5H1780"/><path d="M0 519.5H1780"/><path d="M0 539.5H1780"/><path d="M0 559.5H1780"/><path d="M0 579.5H1780"/><path d="M0 599.5H1780"/><path d="M0 619.5H1780"/><path d="M0 639.5H1780"/><path d="M0 659.5H1780"/><path d="M0 679.5H1780"/><path d="M0 699.5H1780"/><path d="M0 719.5H1780"/><path d="M0 739.5H1780"/><path d="M0 759.5H1780"/><path d="M0 779.5H1780"/><path d="M118.5 0V766"/><path d="M191.5 0V766"/><path d="M280.5 0V766"/><path d="M441.5 0V766"/><path d="M505.5 0V766"/><path d="M629.5 0V766"/><path d="M713.5 0V766"/><path d="M759.5 0V766"/><path d="M904.5 0V766"/><path d="M950.5 0V766"/><path d="M996.5 0V766"/><path d="M1042.5 0V766"/><path d="M1088.5 0V766"/><path d="M1134.5 0V766"/><path d="M1180.5 0V766"/><path d="M1226.5 0V766"/><path d="M1272.5 0V766"/><path d="M1318.5 0V766"/><path d="M1364.5 0V766"/><path d="M1410.5 0V766"/><path d="M1456.5 0V766"/><path d="M1502.5 0V766"/><path d="M1548.5 0V766"/><path d="M1594.5 0V766"/><path d="M1640.5 0V766"/><path d="M1686.5 0V766"/><path d="M1732.5 0V766"/></g></svg><div style="left:0px;top:0px;width:442px;height:20px;background:#70ad47;"></div><div style="left:0px;top:20px;width:441px;height:19px;background:#e2efda;"></div><div style="left:0px;top:39px;width:442px;height:1px;background:#a9d08e;"></div><div style="left:0px;top:59px;width:442px;height:1px;background:#a9d08e;"></div><div style="left:0px;top:60px;width:441px;height:19px;background:#e2efda;"></div><div style="left:0px;top:79px;width:442px;height:1px;background:#a9d08e;"></div><div style="left:0px;top:99px;width:442px;height:1px;background:#a9d08e;"></div><div style="left:0px;top:100px;width:441px;height:19px;background:#e2efda;"></div><div style="left:0px;top:119px;width:442px;height:1px;background:#a9d08e;"></div><div style="left:0px;top:139px;width:442px;height:1px;background:#a9d08e;"></div><div style="left:0px;top:140px;width:441px;height:19px;background:#e2efda;"></div><div style="left:0px;top:159px;width:442px;height:1px;background:#a9d08e;"></div><div style="left:0px;top:179px;width:442px;height:1px;background:#a9d08e;"></div><div style="left:0px;top:180px;width:441px;height:19px;background:#e2efda;"></div><div style="left:0px;top:199px;width:442px;height:1px;background:#a9d08e;"></div><div style="left:0px;top:219px;width:442px;height:1px;background:#a9d08e;"></div><div style="left:0px;top:220px;width:441px;height:19px;background:#e2efda;"></div><div style="left:0px;top:239px;width:442px;height:1px;background:#a9d08e;"></div><div style="left:0px;top:259px;width:442px;height:1px;background:#a9d08e;"></div><div style="left:0px;top:260px;width:441px;height:19px;background:#e2efda;"></div><div style="left:0px;top:279px;width:442px;height:1px;background:#a9d08e;"></div><div style="left:0px;top:299px;width:442px;height:1px;background:#a9d08e;"></div><div style="left:0px;top:300px;width:441px;height:19px;background:#e2efda;"></div><div style="left:0px;top:319px;width:442px;height:1px;background:#a9d08e;"></div><div style="left:0px;top:339px;width:442px;height:1px;background:#a9d08e;"></div><div style="left:0px;top:340px;width:441px;height:19px;background:#e2efda;"></div><div style="left:0px;top:359px;width:442px;height:1px;background:#a9d08e;"></div><div style="left:0px;top:379px;width:442px;height:1px;background:#a9d08e;"></div><div style="left:0px;top:380px;width:441px;height:19px;background:#e2efda;"></div><div style="left:0px;top:399px;width:442px;height:1px;background:#a9d08e;"></div><div style="left:0px;top:419px;width:442px;height:1px;background:#a9d08e;"></div><div style="left:0px;top:420px;width:441px;height:19px;background:#e2efda;"></div><div style="left:0px;top:439px;width:442px;height:1px;background:#a9d08e;"></div><div style="left:0px;top:459px;width:442px;height:1px;background:#a9d08e;"></div><div style="left:0px;top:460px;width:441px;height:19px;background:#e2efda;"></div><div style="left:0px;top:479px;width:442px;height:1px;background:#a9d08e;"></div><div style="left:0px;top:499px;width:442px;height:1px;background:#a9d08e;"></div><div style="left:0px;top:500px;width:441px;height:19px;background:#e2efda;"></div><div style="left:0px;top:519px;width:442px;height:1px;background:#a9d08e;"></div><div style="left:0px;top:539px;width:442px;height:1px;background:#a9d08e;"></div><div style="left:0px;top:540px;width:441px;height:19px;background:#e2efda;"></div><div style="left:0px;top:559px;width:442px;height:1px;background:#a9d08e;"></div><div style="left:0px;top:579px;width:442px;height:1px;background:#a9d08e;"></div><div style="left:0px;top:580px;width:441px;height:19px;background:#e2efda;"></div><div style="left:0px;top:599px;width:442px;height:1px;background:#a9d08e;"></div><div style="left:0px;top:619px;width:442px;height:1px;background:#a9d08e;"></div><div style="left:0px;top:620px;width:441px;height:19px;background:#e2efda;"></div><div style="left:0px;top:639px;width:442px;height:1px;background:#a9d08e;"></div><div style="left:0px;top:659px;width:442px;height:1px;background:#a9d08e;"></div><div style="left:0px;top:660px;width:441px;height:19px;background:#e2efda;"></div><div style="left:0px;top:679px;width:442px;height:1px;background:#a9d08e;"></div><div style="left:0px;top:699px;width:442px;height:1px;background:#a9d08e;"></div><div style="left:0px;top:700px;width:441px;height:19px;background:#e2efda;"></div><div style="left:0px;top:719px;width:442px;height:1px;background:#a9d08e;"></div><div style="left:0px;top:739px;width:442px;height:1px;background:#a9d08e;"></div><div style="left:0px;top:740px;width:441px;height:19px;background:#e2efda;"></div><div style="left:0px;top:759px;width:442px;height:1px;background:#a9d08e;"></div><div style="left:0px;top:779px;width:442px;height:1px;background:#a9d08e;"></div><div style="left:441px;top:0px;width:1px;height:766px;background:#a9d08e;"></div><div style="left:505px;top:0px;width:209px;height:19px;background:#d9e1f2;"></div><div style="left:505px;top:19px;width:209px;height:1px;background:#8ea9db;"></div><div style="left:506px;top:20px;width:207px;height:239px;background:#fff;"></div><div style="left:505px;top:260px;width:209px;height:20px;background:#d9e1f2;"></div><div style="left:505px;top:259px;width:209px;height:1px;background:#8ea9db;"></div><div style="left:759px;top:0px;width:145px;height:40px;background:#70ad47;"></div><div style="left:759px;top:19px;width:145px;height:1px;background:#a9d08e;"></div><div style="left:759px;top:39px;width:145px;height:1px;background:#a9d08e;"></div><div style="left:904px;top:0px;width:47px;height:19px;background:#e2efda;"></div><div style="left:905px;top:20px;width:45px;height:19px;background:#e2efda;"></div><div style="left:904px;top:19px;width:47px;height:1px;background:#a9d08e;"></div><div style="left:904px;top:39px;width:47px;height:1px;background:#a9d08e;"></div><div style="left:950px;top:20px;width:1px;height:20px;background:#a9d08e;"></div><div style="left:951px;top:0px;width:45px;height:19px;background:#fff;"></div><div style="left:950px;top:19px;width:47px;height:1px;background:#a9d08e;"></div><div style="left:950px;top:39px;width:47px;height:1px;background:#a9d08e;"></div><div style="left:996px;top:20px;width:1px;height:20px;background:#a9d08e;"></div><div style="left:996px;top:0px;width:47px;height:19px;background:#e2efda;"></div><div style="left:997px;top:20px;width:45px;height:19px;background:#e2efda;"></div><div style="left:996px;top:19px;width:47px;height:1px;background:#a9d08e;"></div><div style="left:996px;top:39px;width:47px;height:1px;background:#a9d08e;"></div><div style="left:1042px;top:20px;width:1px;height:20px;background:#a9d08e;"></div><div style="left:1043px;top:0px;width:45px;height:19px;background:#fff;"></div><div style="left:1042px;top:19px;width:47px;height:1px;background:#a9d08e;"></div><div style="left:1042px;top:39px;width:47px;height:1px;background:#a9d08e;"></div><div style="left:1088px;top:20px;width:1px;height:20px;background:#a9d08e;"></div><div style="left:1088px;top:0px;width:47px;height:19px;background:#e2efda;"></div><div style="left:1089px;top:20px;width:45px;height:19px;background:#e2efda;"></div><div style="left:1088px;top:19px;width:47px;height:1px;background:#a9d08e;"></div><div style="left:1088px;top:39px;width:47px;height:1px;background:#a9d08e;"></div><div style="left:1134px;top:20px;width:1px;height:20px;background:#a9d08e;"></div><div style="left:1135px;top:0px;width:45px;height:19px;background:#fff;"></div><div style="left:1134px;top:19px;width:47px;height:1px;background:#a9d08e;"></div><div style="left:1134px;top:39px;width:47px;height:1px;background:#a9d08e;"></div><div style="left:1180px;top:20px;width:1px;height:20px;background:#a9d08e;"></div><div style="left:1180px;top:0px;width:47px;height:19px;background:#e2efda;"></div><div style="left:1181px;top:20px;width:45px;height:19px;background:#e2efda;"></div><div style="left:1180px;top:19px;width:47px;height:1px;background:#a9d08e;"></div><div style="left:1180px;top:39px;width:47px;height:1px;background:#a9d08e;"></div><div style="left:1226px;top:20px;width:1px;height:20px;background:#a9d08e;"></div><div style="left:1227px;top:0px;width:45px;height:19px;background:#fff;"></div><div style="left:1226px;top:19px;width:47px;height:1px;background:#a9d08e;"></div><div style="left:1226px;top:39px;width:47px;height:1px;background:#a9d08e;"></div><div style="left:1272px;top:20px;width:1px;height:20px;background:#a9d08e;"></div><div style="left:1272px;top:0px;width:47px;height:19px;background:#e2efda;"></div><div style="left:1273px;top:20px;width:45px;height:19px;background:#e2efda;"></div><div style="left:1272px;top:19px;width:47px;height:1px;background:#a9d08e;"></div><div style="left:1272px;top:39px;width:47px;height:1px;background:#a9d08e;"></div><div style="left:1318px;top:20px;width:1px;height:20px;background:#a9d08e;"></div><div style="left:1319px;top:0px;width:45px;height:19px;background:#fff;"></div><div style="left:1318px;top:19px;width:47px;height:1px;background:#a9d08e;"></div><div style="left:1318px;top:39px;width:47px;height:1px;background:#a9d08e;"></div><div style="left:1364px;top:20px;width:1px;height:20px;background:#a9d08e;"></div><div style="left:1364px;top:0px;width:47px;height:19px;background:#e2efda;"></div><div style="left:1365px;top:20px;width:45px;height:19px;background:#e2efda;"></div><div style="left:1364px;top:19px;width:47px;height:1px;background:#a9d08e;"></div><div style="left:1364px;top:39px;width:47px;height:1px;background:#a9d08e;"></div><div style="left:1410px;top:20px;width:1px;height:20px;background:#a9d08e;"></div><div style="left:1411px;top:0px;width:45px;height:19px;background:#fff;"></div><div style="left:1410px;top:19px;width:47px;height:1px;background:#a9d08e;"></div><div style="left:1410px;top:39px;width:47px;height:1px;background:#a9d08e;"></div><div style="left:1456px;top:20px;width:1px;height:20px;background:#a9d08e;"></div><div style="left:1456px;top:0px;width:47px;height:19px;background:#e2efda;"></div><div style="left:1457px;top:20px;width:45px;height:19px;background:#e2efda;"></div><div style="left:1456px;top:19px;width:47px;height:1px;background:#a9d08e;"></div><div style="left:1456px;top:39px;width:47px;height:1px;background:#a9d08e;"></div><div style="left:1502px;top:20px;width:1px;height:20px;background:#a9d08e;"></div><div style="left:1503px;top:0px;width:45px;height:19px;background:#fff;"></div><div style="left:1502px;top:19px;width:47px;height:1px;background:#a9d08e;"></div><div style="left:1502px;top:39px;width:47px;height:1px;background:#a9d08e;"></div><div style="left:1548px;top:20px;width:1px;height:20px;background:#a9d08e;"></div><div style="left:1548px;top:0px;width:47px;height:19px;background:#e2efda;"></div><div style="left:1549px;top:20px;width:45px;height:19px;background:#e2efda;"></div><div style="left:1548px;top:19px;width:47px;height:1px;background:#a9d08e;"></div><div style="left:1548px;top:39px;width:47px;height:1px;background:#a9d08e;"></div><div style="left:1594px;top:20px;width:1px;height:20px;background:#a9d08e;"></div><div style="left:1595px;top:0px;width:45px;height:19px;background:#fff;"></div><div style="left:1594px;top:19px;width:47px;height:1px;background:#a9d08e;"></div><div style="left:1594px;top:39px;width:47px;height:1px;background:#a9d08e;"></div><div style="left:1640px;top:20px;width:1px;height:20px;background:#a9d08e;"></div><div style="left:1640px;top:0px;width:47px;height:19px;background:#e2efda;"></div><div style="left:1641px;top:20px;width:45px;height:19px;background:#e2efda;"></div><div style="left:1640px;top:19px;width:47px;height:1px;background:#a9d08e;"></div><div style="left:1640px;top:39px;width:47px;height:1px;background:#a9d08e;"></div><div style="left:1686px;top:20px;width:1px;height:20px;background:#a9d08e;"></div><div style="left:1687px;top:0px;width:45px;height:19px;background:#fff;"></div><div style="left:1686px;top:19px;width:47px;height:1px;background:#a9d08e;"></div><div style="left:1686px;top:39px;width:47px;height:1px;background:#a9d08e;"></div><div style="left:1732px;top:20px;width:1px;height:20px;background:#a9d08e;"></div><div style="left:1732px;top:0px;width:48px;height:19px;background:#e2efda;"></div><div style="left:1733px;top:20px;width:46px;height:19px;background:#e2efda;"></div><div style="left:1732px;top:19px;width:48px;height:1px;background:#a9d08e;"></div><div style="left:1732px;top:39px;width:48px;height:1px;background:#a9d08e;"></div><div style="left:1826px;top:20px;width:1px;height:20px;background:#a9d08e;"></div><div style="left:904px;top:20px;width:1px;height:20px;background:#a9d08e;"></div><div style="left:760px;top:60px;width:604px;height:39px;background:#f2f2f2;"></div><div style="left:759px;top:59px;width:606px;height:1px;background:#3f3f3f;"></div><div style="left:759px;top:79px;width:606px;height:1px;background:#3f3f3f;"></div><div style="left:759px;top:99px;width:606px;height:1px;background:#3f3f3f;"></div><div style="left:759px;top:59px;width:1px;height:41px;background:#3f3f3f;"></div><div style="left:904px;top:59px;width:1px;height:41px;background:#3f3f3f;"></div><div style="left:950px;top:59px;width:1px;height:41px;background:#3f3f3f;"></div><div style="left:996px;top:59px;width:1px;height:41px;background:#3f3f3f;"></div><div style="left:1042px;top:59px;width:1px;height:41px;background:#3f3f3f;"></div><div style="left:1088px;top:59px;width:1px;height:41px;background:#3f3f3f;"></div><div style="left:1134px;top:59px;width:1px;height:41px;background:#3f3f3f;"></div><div style="left:1180px;top:59px;width:1px;height:41px;background:#3f3f3f;"></div><div style="left:1226px;top:59px;width:1px;height:41px;background:#3f3f3f;"></div><div style="left:1272px;top:59px;width:1px;height:41px;background:#3f3f3f;"></div><div style="left:1318px;top:59px;width:1px;height:41px;background:#3f3f3f;"></div><div style="left:1364px;top:59px;width:1px;height:41px;background:#3f3f3f;"></div><svg style="left:0;top:0" width="700" height="20"><rect x="101.5" y="1.5" width="16" height="16" fill="#f4f4f6" stroke="#a6a6a6"/><path d="M106 8h7l-3.5 4z" fill="#595959"/><rect x="174.5" y="1.5" width="16" height="16" fill="#f4f4f6" stroke="#a6a6a6"/><path d="M178 11h5l-2.500 3z" fill="#595959"/><path d="M185.5 14v-8.500M184 7.3l1.500-2 1.500 2" stroke="#595959" stroke-width="1" fill="none"/><rect x="263.5" y="1.5" width="16" height="16" fill="#f4f4f6" stroke="#a6a6a6"/><path d="M268 8h7l-3.5 4z" fill="#595959"/><rect x="424.5" y="1.5" width="16" height="16" fill="#f4f4f6" stroke="#a6a6a6"/><path d="M429 8h7l-3.5 4z" fill="#595959"/><rect x="612.5" y="1.5" width="16" height="16" fill="#f4f4f6" stroke="#a6a6a6"/><path d="M617 8h7l-3.5 4z" fill="#595959"/></svg><div style="left:628px;top:598px;width:83px;height:19px;border:2px solid #217346"></div><div style="left:710px;top:616px;width:7px;height:7px;background:#fff;"></div><div style="left:711px;top:617px;width:5px;height:5px;background:#217346;"></div><div style="left:-26px;top:-262px;width:0;height:0"><span class="t" style="left:28.00px;top:264.00px;font-size:13px;line-height:17px;color:#fff;letter-spacing:0.146px;font-weight:bold;">nr_zamowienia</span><span class="t" style="left:147.00px;top:264.00px;font-size:13px;line-height:17px;color:#fff;letter-spacing:0.209px;font-weight:bold;">data</span><span class="t" style="left:220.00px;top:264.00px;font-size:13px;line-height:17px;color:#fff;letter-spacing:-0.167px;font-weight:bold;">magazyn</span><span class="t" style="left:309.00px;top:264.00px;font-size:13px;line-height:17px;color:#fff;letter-spacing:-0.011px;font-weight:bold;">wielkosc zamowienia</span><span class="t" style="left:135.00px;top:284.00px;font-size:13px;line-height:17px;color:#000;letter-spacing:-0.230px;">3</span><span class="t" style="left:149.00px;top:284.00px;font-size:13px;line-height:17px;color:#000;letter-spacing:-0.050px;">2021-01-02</span><span class="t" style="left:220.00px;top:284.00px;font-size:13px;line-height:17px;color:#000;letter-spacing:0.390px;">Gniezno</span><span class="t" style="left:437.00px;top:284.00px;font-size:13px;line-height:17px;color:#000;letter-spacing:-0.230px;">5190</span><span class="t" style="left:135.00px;top:304.00px;font-size:13px;line-height:17px;color:#000;letter-spacing:-0.230px;">2</span><span class="t" style="left:149.00px;top:304.00px;font-size:13px;line-height:17px;color:#000;letter-spacing:-0.050px;">2021-01-02</span><span class="t" style="left:220.00px;top:304.00px;font-size:13px;line-height:17px;color:#000;letter-spacing:0.210px;">Przemysl</span><span class="t" style="left:437.00px;top:304.00px;font-size:13px;line-height:17px;color:#000;letter-spacing:-0.230px;">4420</span><span class="t" style="left:135.00px;top:324.00px;font-size:13px;line-height:17px;color:#000;letter-spacing:-0.230px;">1</span><span class="t" style="left:149.00px;top:324.00px;font-size:13px;line-height:17px;color:#000;letter-spacing:-0.050px;">2021-01-02</span><span class="t" style="left:220.00px;top:324.00px;font-size:13px;line-height:17px;color:#000;letter-spacing:0.439px;">Ogrodzieniec</span><span class="t" style="left:437.00px;top:324.00px;font-size:13px;line-height:17px;color:#000;letter-spacing:-0.230px;">1290</span><span class="t" style="left:135.00px;top:344.00px;font-size:13px;line-height:17px;color:#000;letter-spacing:-0.230px;">6</span><span class="t" style="left:149.00px;top:344.00px;font-size:13px;line-height:17px;color:#000;letter-spacing:-0.050px;">2021-01-03</span><span class="t" style="left:220.00px;top:344.00px;font-size:13px;line-height:17px;color:#000;letter-spacing:0.210px;">Przemysl</span><span class="t" style="left:437.00px;top:344.00px;font-size:13px;line-height:17px;color:#000;letter-spacing:-0.230px;">8530</span><span class="t" style="left:135.00px;top:364.00px;font-size:13px;line-height:17px;color:#000;letter-spacing:-0.230px;">5</span><span class="t" style="left:149.00px;top:364.00px;font-size:13px;line-height:17px;color:#000;letter-spacing:-0.050px;">2021-01-03</span><span class="t" style="left:220.00px;top:364.00px;font-size:13px;line-height:17px;color:#000;letter-spacing:0.390px;">Gniezno</span><span class="t" style="left:437.00px;top:364.00px;font-size:13px;line-height:17px;color:#000;letter-spacing:-0.230px;">6000</span><span class="t" style="left:135.00px;top:384.00px;font-size:13px;line-height:17px;color:#000;letter-spacing:-0.230px;">4</span><span class="t" style="left:149.00px;top:384.00px;font-size:13px;line-height:17px;color:#000;letter-spacing:-0.050px;">2021-01-03</span><span class="t" style="left:220.00px;top:384.00px;font-size:13px;line-height:17px;color:#000;letter-spacing:0.918px;">Malbork</span><span class="t" style="left:444.00px;top:384.00px;font-size:13px;line-height:17px;color:#000;letter-spacing:-0.230px;">950</span><span class="t" style="left:135.00px;top:404.00px;font-size:13px;line-height:17px;color:#000;letter-spacing:-0.230px;">8</span><span class="t" style="left:149.00px;top:404.00px;font-size:13px;line-height:17px;color:#000;letter-spacing:-0.050px;">2021-01-04</span><span class="t" style="left:220.00px;top:404.00px;font-size:13px;line-height:17px;color:#000;letter-spacing:0.210px;">Przemysl</span><span class="t" style="left:437.00px;top:404.00px;font-size:13px;line-height:17px;color:#000;letter-spacing:-0.230px;">2460</span><span class="t" style="left:135.00px;top:424.00px;font-size:13px;line-height:17px;color:#000;letter-spacing:-0.230px;">7</span><span class="t" style="left:149.00px;top:424.00px;font-size:13px;line-height:17px;color:#000;letter-spacing:-0.050px;">2021-01-04</span><span class="t" style="left:220.00px;top:424.00px;font-size:13px;line-height:17px;color:#000;letter-spacing:0.918px;">Malbork</span><span class="t" style="left:437.00px;top:424.00px;font-size:13px;line-height:17px;color:#000;letter-spacing:0.011px;">1140</span><span class="t" style="left:128.00px;top:444.00px;font-size:13px;line-height:17px;color:#000;letter-spacing:-0.230px;">10</span><span class="t" style="left:149.00px;top:444.00px;font-size:13px;line-height:17px;color:#000;letter-spacing:-0.050px;">2021-01-05</span><span class="t" style="left:220.00px;top:444.00px;font-size:13px;line-height:17px;color:#000;letter-spacing:0.210px;">Przemysl</span><span class="t" style="left:437.00px;top:444.00px;font-size:13px;line-height:17px;color:#000;letter-spacing:-0.230px;">7920</span><span class="t" style="left:135.00px;top:464.00px;font-size:13px;line-height:17px;color:#000;letter-spacing:-0.230px;">9</span><span class="t" style="left:149.00px;top:464.00px;font-size:13px;line-height:17px;color:#000;letter-spacing:-0.050px;">2021-01-05</span><span class="t" style="left:220.00px;top:464.00px;font-size:13px;line-height:17px;color:#000;letter-spacing:0.390px;">Gniezno</span><span class="t" style="left:437.00px;top:464.00px;font-size:13px;line-height:17px;color:#000;letter-spacing:-0.230px;">7520</span><span class="t" style="left:128.00px;top:484.00px;font-size:13px;line-height:17px;color:#000;letter-spacing:0.252px;">11</span><span class="t" style="left:149.00px;top:484.00px;font-size:13px;line-height:17px;color:#000;letter-spacing:-0.050px;">2021-01-05</span><span class="t" style="left:220.00px;top:484.00px;font-size:13px;line-height:17px;color:#000;letter-spacing:0.439px;">Ogrodzieniec</span><span class="t" style="left:437.00px;top:484.00px;font-size:13px;line-height:17px;color:#000;letter-spacing:-0.230px;">1430</span><span class="t" style="left:128.00px;top:504.00px;font-size:13px;line-height:17px;color:#000;letter-spacing:-0.230px;">14</span><span class="t" style="left:149.00px;top:504.00px;font-size:13px;line-height:17px;color:#000;letter-spacing:-0.050px;">2021-01-06</span><span class="t" style="left:220.00px;top:504.00px;font-size:13px;line-height:17px;color:#000;letter-spacing:0.390px;">Gniezno</span><span class="t" style="left:437.00px;top:504.00px;font-size:13px;line-height:17px;color:#000;letter-spacing:-0.230px;">7340</span><span class="t" style="left:128.00px;top:524.00px;font-size:13px;line-height:17px;color:#000;letter-spacing:-0.230px;">13</span><span class="t" style="left:149.00px;top:524.00px;font-size:13px;line-height:17px;color:#000;letter-spacing:-0.050px;">2021-01-06</span><span class="t" style="left:220.00px;top:524.00px;font-size:13px;line-height:17px;color:#000;letter-spacing:0.439px;">Ogrodzieniec</span><span class="t" style="left:437.00px;top:524.00px;font-size:13px;line-height:17px;color:#000;letter-spacing:-0.230px;">5540</span><span class="t" style="left:128.00px;top:544.00px;font-size:13px;line-height:17px;color:#000;letter-spacing:-0.230px;">12</span><span class="t" style="left:149.00px;top:544.00px;font-size:13px;line-height:17px;color:#000;letter-spacing:-0.050px;">2021-01-06</span><span class="t" style="left:220.00px;top:544.00px;font-size:13px;line-height:17px;color:#000;letter-spacing:0.918px;">Malbork</span><span class="t" style="left:437.00px;top:544.00px;font-size:13px;line-height:17px;color:#000;letter-spacing:-0.230px;">1500</span><span class="t" style="left:128.00px;top:564.00px;font-size:13px;line-height:17px;color:#000;letter-spacing:-0.230px;">15</span><span class="t" style="left:149.00px;top:564.00px;font-size:13px;line-height:17px;color:#000;letter-spacing:-0.050px;">2021-01-07</span><span class="t" style="left:220.00px;top:564.00px;font-size:13px;line-height:17px;color:#000;letter-spacing:0.210px;">Przemysl</span><span class="t" style="left:437.00px;top:564.00px;font-size:13px;line-height:17px;color:#000;letter-spacing:-0.230px;">8170</span><span class="t" style="left:128.00px;top:584.00px;font-size:13px;line-height:17px;color:#000;letter-spacing:-0.230px;">16</span><span class="t" style="left:149.00px;top:584.00px;font-size:13px;line-height:17px;color:#000;letter-spacing:-0.050px;">2021-01-08</span><span class="t" style="left:220.00px;top:584.00px;font-size:13px;line-height:17px;color:#000;letter-spacing:0.439px;">Ogrodzieniec</span><span class="t" style="left:437.00px;top:584.00px;font-size:13px;line-height:17px;color:#000;letter-spacing:-0.230px;">9410</span><span class="t" style="left:128.00px;top:604.00px;font-size:13px;line-height:17px;color:#000;letter-spacing:-0.230px;">17</span><span class="t" style="left:149.00px;top:604.00px;font-size:13px;line-height:17px;color:#000;letter-spacing:-0.050px;">2021-01-08</span><span class="t" style="left:220.00px;top:604.00px;font-size:13px;line-height:17px;color:#000;letter-spacing:0.918px;">Malbork</span><span class="t" style="left:437.00px;top:604.00px;font-size:13px;line-height:17px;color:#000;letter-spacing:-0.230px;">4660</span><span class="t" style="left:128.00px;top:624.00px;font-size:13px;line-height:17px;color:#000;letter-spacing:-0.230px;">19</span><span class="t" style="left:149.00px;top:624.00px;font-size:13px;line-height:17px;color:#000;letter-spacing:-0.050px;">2021-01-09</span><span class="t" style="left:220.00px;top:624.00px;font-size:13px;line-height:17px;color:#000;letter-spacing:0.210px;">Przemysl</span><span class="t" style="left:437.00px;top:624.00px;font-size:13px;line-height:17px;color:#000;letter-spacing:-0.230px;">6760</span><span class="t" style="left:128.00px;top:644.00px;font-size:13px;line-height:17px;color:#000;letter-spacing:-0.230px;">18</span><span class="t" style="left:149.00px;top:644.00px;font-size:13px;line-height:17px;color:#000;letter-spacing:-0.050px;">2021-01-09</span><span class="t" style="left:220.00px;top:644.00px;font-size:13px;line-height:17px;color:#000;letter-spacing:0.439px;">Ogrodzieniec</span><span class="t" style="left:437.00px;top:644.00px;font-size:13px;line-height:17px;color:#000;letter-spacing:-0.230px;">2240</span><span class="t" style="left:128.00px;top:664.00px;font-size:13px;line-height:17px;color:#000;letter-spacing:-0.230px;">20</span><span class="t" style="left:149.00px;top:664.00px;font-size:13px;line-height:17px;color:#000;letter-spacing:-0.050px;">2021-01-10</span><span class="t" style="left:220.00px;top:664.00px;font-size:13px;line-height:17px;color:#000;letter-spacing:0.390px;">Gniezno</span><span class="t" style="left:437.00px;top:664.00px;font-size:13px;line-height:17px;color:#000;letter-spacing:-0.230px;">7850</span><span class="t" style="left:128.00px;top:684.00px;font-size:13px;line-height:17px;color:#000;letter-spacing:-0.230px;">23</span><span class="t" style="left:149.00px;top:684.00px;font-size:13px;line-height:17px;color:#000;letter-spacing:0.047px;">2021-01-11</span><span class="t" style="left:220.00px;top:684.00px;font-size:13px;line-height:17px;color:#000;letter-spacing:0.439px;">Ogrodzieniec</span><span class="t" style="left:437.00px;top:684.00px;font-size:13px;line-height:17px;color:#000;letter-spacing:-0.230px;">9750</span><span class="t" style="left:128.00px;top:704.00px;font-size:13px;line-height:17px;color:#000;letter-spacing:-0.230px;">21</span><span class="t" style="left:149.00px;top:704.00px;font-size:13px;line-height:17px;color:#000;letter-spacing:0.047px;">2021-01-11</span><span class="t" style="left:220.00px;top:704.00px;font-size:13px;line-height:17px;color:#000;letter-spacing:0.210px;">Przemysl</span><span class="t" style="left:437.00px;top:704.00px;font-size:13px;line-height:17px;color:#000;letter-spacing:-0.230px;">5440</span><span class="t" style="left:128.00px;top:724.00px;font-size:13px;line-height:17px;color:#000;letter-spacing:-0.230px;">22</span><span class="t" style="left:149.00px;top:724.00px;font-size:13px;line-height:17px;color:#000;letter-spacing:0.047px;">2021-01-11</span><span class="t" style="left:220.00px;top:724.00px;font-size:13px;line-height:17px;color:#000;letter-spacing:0.918px;">Malbork</span><span class="t" style="left:437.00px;top:724.00px;font-size:13px;line-height:17px;color:#000;letter-spacing:-0.230px;">5230</span><span class="t" style="left:128.00px;top:744.00px;font-size:13px;line-height:17px;color:#000;letter-spacing:-0.230px;">24</span><span class="t" style="left:149.00px;top:744.00px;font-size:13px;line-height:17px;color:#000;letter-spacing:-0.050px;">2021-01-12</span><span class="t" style="left:220.00px;top:744.00px;font-size:13px;line-height:17px;color:#000;letter-spacing:0.390px;">Gniezno</span><span class="t" style="left:437.00px;top:744.00px;font-size:13px;line-height:17px;color:#000;letter-spacing:-0.230px;">4800</span><span class="t" style="left:128.00px;top:764.00px;font-size:13px;line-height:17px;color:#000;letter-spacing:-0.230px;">25</span><span class="t" style="left:149.00px;top:764.00px;font-size:13px;line-height:17px;color:#000;letter-spacing:-0.050px;">2021-01-13</span><span class="t" style="left:220.00px;top:764.00px;font-size:13px;line-height:17px;color:#000;letter-spacing:0.918px;">Malbork</span><span class="t" style="left:437.00px;top:764.00px;font-size:13px;line-height:17px;color:#000;letter-spacing:-0.230px;">8650</span><span class="t" style="left:128.00px;top:784.00px;font-size:13px;line-height:17px;color:#000;letter-spacing:-0.230px;">27</span><span class="t" style="left:149.00px;top:784.00px;font-size:13px;line-height:17px;color:#000;letter-spacing:-0.050px;">2021-01-14</span><span class="t" style="left:220.00px;top:784.00px;font-size:13px;line-height:17px;color:#000;letter-spacing:0.210px;">Przemysl</span><span class="t" style="left:437.00px;top:784.00px;font-size:13px;line-height:17px;color:#000;letter-spacing:-0.230px;">5000</span><span class="t" style="left:128.00px;top:804.00px;font-size:13px;line-height:17px;color:#000;letter-spacing:-0.230px;">26</span><span class="t" style="left:149.00px;top:804.00px;font-size:13px;line-height:17px;color:#000;letter-spacing:-0.050px;">2021-01-14</span><span class="t" style="left:220.00px;top:804.00px;font-size:13px;line-height:17px;color:#000;letter-spacing:0.439px;">Ogrodzieniec</span><span class="t" style="left:437.00px;top:804.00px;font-size:13px;line-height:17px;color:#000;letter-spacing:-0.230px;">2260</span><span class="t" style="left:128.00px;top:824.00px;font-size:13px;line-height:17px;color:#000;letter-spacing:-0.230px;">28</span><span class="t" style="left:149.00px;top:824.00px;font-size:13px;line-height:17px;color:#000;letter-spacing:-0.050px;">2021-01-14</span><span class="t" style="left:220.00px;top:824.00px;font-size:13px;line-height:17px;color:#000;letter-spacing:0.918px;">Malbork</span><span class="t" style="left:437.00px;top:824.00px;font-size:13px;line-height:17px;color:#000;letter-spacing:-0.230px;">1650</span><span class="t" style="left:128.00px;top:844.00px;font-size:13px;line-height:17px;color:#000;letter-spacing:-0.230px;">29</span><span class="t" style="left:149.00px;top:844.00px;font-size:13px;line-height:17px;color:#000;letter-spacing:-0.050px;">2021-01-15</span><span class="t" style="left:220.00px;top:844.00px;font-size:13px;line-height:17px;color:#000;letter-spacing:0.918px;">Malbork</span><span class="t" style="left:437.00px;top:844.00px;font-size:13px;line-height:17px;color:#000;letter-spacing:-0.230px;">7060</span><span class="t" style="left:128.00px;top:864.00px;font-size:13px;line-height:17px;color:#000;letter-spacing:-0.230px;">31</span><span class="t" style="left:149.00px;top:864.00px;font-size:13px;line-height:17px;color:#000;letter-spacing:-0.050px;">2021-01-15</span><span class="t" style="left:220.00px;top:864.00px;font-size:13px;line-height:17px;color:#000;letter-spacing:0.390px;">Gniezno</span><span class="t" style="left:437.00px;top:864.00px;font-size:13px;line-height:17px;color:#000;letter-spacing:-0.230px;">5760</span><span class="t" style="left:128.00px;top:884.00px;font-size:13px;line-height:17px;color:#000;letter-spacing:-0.230px;">30</span><span class="t" style="left:149.00px;top:884.00px;font-size:13px;line-height:17px;color:#000;letter-spacing:-0.050px;">2021-01-15</span><span class="t" style="left:220.00px;top:884.00px;font-size:13px;line-height:17px;color:#000;letter-spacing:0.439px;">Ogrodzieniec</span><span class="t" style="left:437.00px;top:884.00px;font-size:13px;line-height:17px;color:#000;letter-spacing:-0.230px;">3260</span><span class="t" style="left:128.00px;top:904.00px;font-size:13px;line-height:17px;color:#000;letter-spacing:-0.230px;">32</span><span class="t" style="left:149.00px;top:904.00px;font-size:13px;line-height:17px;color:#000;letter-spacing:-0.050px;">2021-01-16</span><span class="t" style="left:220.00px;top:904.00px;font-size:13px;line-height:17px;color:#000;letter-spacing:0.210px;">Przemysl</span><span class="t" style="left:437.00px;top:904.00px;font-size:13px;line-height:17px;color:#000;letter-spacing:-0.230px;">1990</span><span class="t" style="left:128.00px;top:924.00px;font-size:13px;line-height:17px;color:#000;letter-spacing:-0.230px;">33</span><span class="t" style="left:149.00px;top:924.00px;font-size:13px;line-height:17px;color:#000;letter-spacing:-0.050px;">2021-01-17</span><span class="t" style="left:220.00px;top:924.00px;font-size:13px;line-height:17px;color:#000;letter-spacing:0.918px;">Malbork</span><span class="t" style="left:437.00px;top:924.00px;font-size:13px;line-height:17px;color:#000;letter-spacing:-0.230px;">5240</span><span class="t" style="left:128.00px;top:944.00px;font-size:13px;line-height:17px;color:#000;letter-spacing:-0.230px;">35</span><span class="t" style="left:149.00px;top:944.00px;font-size:13px;line-height:17px;color:#000;letter-spacing:-0.050px;">2021-01-17</span><span class="t" style="left:220.00px;top:944.00px;font-size:13px;line-height:17px;color:#000;letter-spacing:0.390px;">Gniezno</span><span class="t" style="left:437.00px;top:944.00px;font-size:13px;line-height:17px;color:#000;letter-spacing:-0.230px;">3220</span><span class="t" style="left:128.00px;top:964.00px;font-size:13px;line-height:17px;color:#000;letter-spacing:-0.230px;">36</span><span class="t" style="left:149.00px;top:964.00px;font-size:13px;line-height:17px;color:#000;letter-spacing:-0.050px;">2021-01-17</span><span class="t" style="left:220.00px;top:964.00px;font-size:13px;line-height:17px;color:#000;letter-spacing:0.439px;">Ogrodzieniec</span><span class="t" style="left:437.00px;top:964.00px;font-size:13px;line-height:17px;color:#000;letter-spacing:-0.230px;">3140</span><span class="t" style="left:128.00px;top:984.00px;font-size:13px;line-height:17px;color:#000;letter-spacing:-0.230px;">34</span><span class="t" style="left:149.00px;top:984.00px;font-size:13px;line-height:17px;color:#000;letter-spacing:-0.050px;">2021-01-17</span><span class="t" style="left:220.00px;top:984.00px;font-size:13px;line-height:17px;color:#000;letter-spacing:0.210px;">Przemysl</span><span class="t" style="left:437.00px;top:984.00px;font-size:13px;line-height:17px;color:#000;letter-spacing:-0.230px;">2720</span><span class="t" style="left:128.00px;top:1004.00px;font-size:13px;line-height:17px;color:#000;letter-spacing:-0.230px;">37</span><span class="t" style="left:149.00px;top:1004.00px;font-size:13px;line-height:17px;color:#000;letter-spacing:-0.050px;">2021-01-18</span><span class="t" style="left:220.00px;top:1004.00px;font-size:13px;line-height:17px;color:#000;letter-spacing:0.918px;">Malbork</span><span class="t" style="left:437.00px;top:1004.00px;font-size:13px;line-height:17px;color:#000;letter-spacing:-0.230px;">4150</span><span class="t" style="left:128.00px;top:1024.00px;font-size:13px;line-height:17px;color:#000;letter-spacing:-0.230px;">38</span><span class="t" style="left:149.00px;top:1024.00px;font-size:13px;line-height:17px;color:#000;letter-spacing:-0.050px;">2021-01-18</span><span class="t" style="left:220.00px;top:1024.00px;font-size:13px;line-height:17px;color:#000;letter-spacing:0.918px;">Malbork</span><span class="t" style="left:437.00px;top:1024.00px;font-size:13px;line-height:17px;color:#000;letter-spacing:-0.230px;">6120</span><span class="t" style="left:534.00px;top:264.00px;font-size:13px;line-height:17px;color:#000;letter-spacing:-0.086px;font-weight:bold;">Etykiety wierszy</span><span class="t" style="left:658.00px;top:264.00px;font-size:13px;line-height:17px;color:#000;letter-spacing:-0.149px;font-weight:bold;">Średnia</span><span class="t" style="left:534.00px;top:284.00px;font-size:13px;line-height:17px;color:#000;letter-spacing:-0.194px;">Jan</span><span class="t" style="left:663.00px;top:284.00px;font-size:13px;line-height:17px;color:#000;letter-spacing:-0.174px;">4855.873016</span><span class="t" style="left:534.00px;top:304.00px;font-size:13px;line-height:17px;color:#000;letter-spacing:0.068px;">Feb</span><span class="t" style="left:663.00px;top:304.00px;font-size:13px;line-height:17px;color:#000;letter-spacing:-0.174px;">5070.357143</span><span class="t" style="left:534.00px;top:324.00px;font-size:13px;line-height:17px;color:#000;letter-spacing:1.175px;">Mar</span><span class="t" style="left:663.00px;top:324.00px;font-size:13px;line-height:17px;color:#000;letter-spacing:-0.174px;">5484.333333</span><span class="t" style="left:534.00px;top:344.00px;font-size:13px;line-height:17px;color:#000;letter-spacing:0.714px;">Apr</span><span class="t" style="left:663.00px;top:344.00px;font-size:13px;line-height:17px;color:#000;letter-spacing:-0.174px;">5184.761905</span><span class="t" style="left:534.00px;top:364.00px;font-size:13px;line-height:17px;color:#000;letter-spacing:0.890px;">May</span><span class="t" style="left:663.00px;top:364.00px;font-size:13px;line-height:17px;color:#000;letter-spacing:-0.174px;">5631.384615</span><span class="t" style="left:534.00px;top:384.00px;font-size:13px;line-height:17px;color:#000;letter-spacing:0.044px;">Jun</span><span class="t" style="left:663.00px;top:384.00px;font-size:13px;line-height:17px;color:#000;letter-spacing:-0.174px;">5422.881356</span><span class="t" style="left:534.00px;top:404.00px;font-size:13px;line-height:17px;color:#000;letter-spacing:-0.027px;">Jul</span><span class="t" style="left:663.00px;top:404.00px;font-size:13px;line-height:17px;color:#000;letter-spacing:-0.174px;">5165.571429</span><span class="t" style="left:534.00px;top:424.00px;font-size:13px;line-height:17px;color:#000;letter-spacing:0.373px;">Aug</span><span class="t" style="left:663.00px;top:424.00px;font-size:13px;line-height:17px;color:#000;letter-spacing:-0.174px;">5628.666667</span><span class="t" style="left:534.00px;top:444.00px;font-size:13px;line-height:17px;color:#000;letter-spacing:-0.100px;">Sep</span><span class="t" style="left:663.00px;top:444.00px;font-size:13px;line-height:17px;color:#000;letter-spacing:-0.174px;">5186.034483</span><span class="t" style="left:534.00px;top:464.00px;font-size:13px;line-height:17px;color:#000;letter-spacing:0.548px;">Oct</span><span class="t" style="left:663.00px;top:464.00px;font-size:13px;line-height:17px;color:#000;letter-spacing:-0.174px;">5096.176471</span><span class="t" style="left:534.00px;top:484.00px;font-size:13px;line-height:17px;color:#000;letter-spacing:0.611px;">Nov</span><span class="t" style="left:663.00px;top:484.00px;font-size:13px;line-height:17px;color:#000;letter-spacing:-0.174px;">5145.507246</span><span class="t" style="left:534.00px;top:504.00px;font-size:13px;line-height:17px;color:#000;letter-spacing:0.177px;">Dec</span><span class="t" style="left:670.00px;top:504.00px;font-size:13px;line-height:17px;color:#000;letter-spacing:-0.168px;">4820.15625</span><span class="t" style="left:534.00px;top:524.00px;font-size:13px;line-height:17px;color:#000;letter-spacing:-0.138px;font-weight:bold;">Suma końcowa</span><span class="t" style="left:663.00px;top:524.00px;font-size:13px;line-height:17px;color:#000;letter-spacing:-0.109px;font-weight:bold;">5220.821192</span><span class="t" style="left:788.00px;top:264.00px;font-size:13px;line-height:17px;color:#fff;letter-spacing:-0.167px;font-weight:bold;">magazyn</span><span class="t" style="left:788.00px;top:284.00px;font-size:13px;line-height:17px;color:#fff;letter-spacing:0.011px;font-weight:bold;">wielkosc_zamowienia</span><div style="left:931px;top:262px;width:45px;height:19px;overflow:hidden"><span class="t" style="left:2.00px;top:2.00px;font-size:13px;line-height:17px;color:#000;letter-spacing:0.390px;">Gniezno</span></div><span class="t" style="left:946.00px;top:284.00px;font-size:13px;line-height:17px;color:#000;letter-spacing:-0.230px;">5190</span><div style="left:977px;top:262px;width:45px;height:19px;overflow:hidden"><span class="t" style="left:2.00px;top:2.00px;font-size:13px;line-height:17px;color:#000;letter-spacing:0.210px;">Przemysl</span></div><span class="t" style="left:992.00px;top:284.00px;font-size:13px;line-height:17px;color:#000;letter-spacing:-0.230px;">4420</span><div style="left:1023px;top:262px;width:45px;height:19px;overflow:hidden"><span class="t" style="left:2.00px;top:2.00px;font-size:13px;line-height:17px;color:#000;letter-spacing:0.439px;">Ogrodzieniec</span></div><span class="t" style="left:1038.00px;top:284.00px;font-size:13px;line-height:17px;color:#000;letter-spacing:-0.230px;">1290</span><div style="left:1069px;top:262px;width:45px;height:19px;overflow:hidden"><span class="t" style="left:2.00px;top:2.00px;font-size:13px;line-height:17px;color:#000;letter-spacing:0.210px;">Przemysl</span></div><span class="t" style="left:1084.00px;top:284.00px;font-size:13px;line-height:17px;color:#000;letter-spacing:-0.230px;">8530</span><div style="left:1115px;top:262px;width:45px;height:19px;overflow:hidden"><span class="t" style="left:2.00px;top:2.00px;font-size:13px;line-height:17px;color:#000;letter-spacing:0.390px;">Gniezno</span></div><span class="t" style="left:1130.00px;top:284.00px;font-size:13px;line-height:17px;color:#000;letter-spacing:-0.230px;">6000</span><div style="left:1161px;top:262px;width:45px;height:19px;overflow:hidden"><span class="t" style="left:2.00px;top:2.00px;font-size:13px;line-height:17px;color:#000;letter-spacing:0.918px;">Malbork</span></div><span class="t" style="left:1183.00px;top:284.00px;font-size:13px;line-height:17px;color:#000;letter-spacing:-0.230px;">950</span><div style="left:1207px;top:262px;width:45px;height:19px;overflow:hidden"><span class="t" style="left:2.00px;top:2.00px;font-size:13px;line-height:17px;color:#000;letter-spacing:0.210px;">Przemysl</span></div><span class="t" style="left:1222.00px;top:284.00px;font-size:13px;line-height:17px;color:#000;letter-spacing:-0.230px;">2460</span><div style="left:1253px;top:262px;width:45px;height:19px;overflow:hidden"><span class="t" style="left:2.00px;top:2.00px;font-size:13px;line-height:17px;color:#000;letter-spacing:0.918px;">Malbork</span></div><span class="t" style="left:1268.00px;top:284.00px;font-size:13px;line-height:17px;color:#000;letter-spacing:0.011px;">1140</span><div style="left:1299px;top:262px;width:45px;height:19px;overflow:hidden"><span class="t" style="left:2.00px;top:2.00px;font-size:13px;line-height:17px;color:#000;letter-spacing:0.210px;">Przemysl</span></div><span class="t" style="left:1314.00px;top:284.00px;font-size:13px;line-height:17px;color:#000;letter-spacing:-0.230px;">7920</span><div style="left:1345px;top:262px;width:45px;height:19px;overflow:hidden"><span class="t" style="left:2.00px;top:2.00px;font-size:13px;line-height:17px;color:#000;letter-spacing:0.390px;">Gniezno</span></div><span class="t" style="left:1360.00px;top:284.00px;font-size:13px;line-height:17px;color:#000;letter-spacing:-0.230px;">7520</span><div style="left:1391px;top:262px;width:45px;height:19px;overflow:hidden"><span class="t" style="left:2.00px;top:2.00px;font-size:13px;line-height:17px;color:#000;letter-spacing:0.439px;">Ogrodzieniec</span></div><span class="t" style="left:1406.00px;top:284.00px;font-size:13px;line-height:17px;color:#000;letter-spacing:-0.230px;">1430</span><div style="left:1437px;top:262px;width:45px;height:19px;overflow:hidden"><span class="t" style="left:2.00px;top:2.00px;font-size:13px;line-height:17px;color:#000;letter-spacing:0.390px;">Gniezno</span></div><span class="t" style="left:1452.00px;top:284.00px;font-size:13px;line-height:17px;color:#000;letter-spacing:-0.230px;">7340</span><div style="left:1483px;top:262px;width:45px;height:19px;overflow:hidden"><span class="t" style="left:2.00px;top:2.00px;font-size:13px;line-height:17px;color:#000;letter-spacing:0.439px;">Ogrodzieniec</span></div><span class="t" style="left:1498.00px;top:284.00px;font-size:13px;line-height:17px;color:#000;letter-spacing:-0.230px;">5540</span><div style="left:1529px;top:262px;width:45px;height:19px;overflow:hidden"><span class="t" style="left:2.00px;top:2.00px;font-size:13px;line-height:17px;color:#000;letter-spacing:0.918px;">Malbork</span></div><span class="t" style="left:1544.00px;top:284.00px;font-size:13px;line-height:17px;color:#000;letter-spacing:-0.230px;">1500</span><div style="left:1575px;top:262px;width:45px;height:19px;overflow:hidden"><span class="t" style="left:2.00px;top:2.00px;font-size:13px;line-height:17px;color:#000;letter-spacing:0.210px;">Przemysl</span></div><span class="t" style="left:1590.00px;top:284.00px;font-size:13px;line-height:17px;color:#000;letter-spacing:-0.230px;">8170</span><div style="left:1621px;top:262px;width:45px;height:19px;overflow:hidden"><span class="t" style="left:2.00px;top:2.00px;font-size:13px;line-height:17px;color:#000;letter-spacing:0.439px;">Ogrodzieniec</span></div><span class="t" style="left:1636.00px;top:284.00px;font-size:13px;line-height:17px;color:#000;letter-spacing:-0.230px;">9410</span><div style="left:1667px;top:262px;width:45px;height:19px;overflow:hidden"><span class="t" style="left:2.00px;top:2.00px;font-size:13px;line-height:17px;color:#000;letter-spacing:0.918px;">Malbork</span></div><span class="t" style="left:1682.00px;top:284.00px;font-size:13px;line-height:17px;color:#000;letter-spacing:-0.230px;">4660</span><div style="left:1713px;top:262px;width:45px;height:19px;overflow:hidden"><span class="t" style="left:2.00px;top:2.00px;font-size:13px;line-height:17px;color:#000;letter-spacing:0.210px;">Przemysl</span></div><span class="t" style="left:1728.00px;top:284.00px;font-size:13px;line-height:17px;color:#000;letter-spacing:-0.230px;">6760</span><div style="left:1759px;top:262px;width:47px;height:19px;overflow:hidden"><span class="t" style="left:2.00px;top:2.00px;font-size:13px;line-height:17px;color:#000;letter-spacing:0.439px;">Ogrodzieniec</span></div><span class="t" style="left:946.00px;top:324.00px;font-size:13px;line-height:17px;color:#3f3f3f;letter-spacing:-0.230px;font-weight:bold;">2021</span><span class="t" style="left:946.00px;top:344.00px;font-size:13px;line-height:17px;color:#3f3f3f;letter-spacing:-0.230px;font-weight:bold;">5221</span><span class="t" style="left:992.00px;top:324.00px;font-size:13px;line-height:17px;color:#3f3f3f;letter-spacing:-0.230px;font-weight:bold;">2022</span><span class="t" style="left:992.00px;top:344.00px;font-size:13px;line-height:17px;color:#3f3f3f;letter-spacing:-0.230px;font-weight:bold;">5241</span><span class="t" style="left:1038.00px;top:324.00px;font-size:13px;line-height:17px;color:#3f3f3f;letter-spacing:-0.230px;font-weight:bold;">2023</span><span class="t" style="left:1038.00px;top:344.00px;font-size:13px;line-height:17px;color:#3f3f3f;letter-spacing:-0.230px;font-weight:bold;">5261</span><span class="t" style="left:1084.00px;top:324.00px;font-size:13px;line-height:17px;color:#3f3f3f;letter-spacing:-0.230px;font-weight:bold;">2024</span><span class="t" style="left:1084.00px;top:344.00px;font-size:13px;line-height:17px;color:#3f3f3f;letter-spacing:-0.230px;font-weight:bold;">5281</span><span class="t" style="left:1130.00px;top:324.00px;font-size:13px;line-height:17px;color:#3f3f3f;letter-spacing:-0.230px;font-weight:bold;">2025</span><span class="t" style="left:1130.00px;top:344.00px;font-size:13px;line-height:17px;color:#3f3f3f;letter-spacing:-0.230px;font-weight:bold;">5301</span><span class="t" style="left:1176.00px;top:324.00px;font-size:13px;line-height:17px;color:#3f3f3f;letter-spacing:-0.230px;font-weight:bold;">2026</span><span class="t" style="left:1176.00px;top:344.00px;font-size:13px;line-height:17px;color:#3f3f3f;letter-spacing:-0.230px;font-weight:bold;">5321</span><span class="t" style="left:1222.00px;top:324.00px;font-size:13px;line-height:17px;color:#3f3f3f;letter-spacing:-0.230px;font-weight:bold;">2027</span><span class="t" style="left:1222.00px;top:344.00px;font-size:13px;line-height:17px;color:#3f3f3f;letter-spacing:-0.230px;font-weight:bold;">5341</span><span class="t" style="left:1268.00px;top:324.00px;font-size:13px;line-height:17px;color:#3f3f3f;letter-spacing:-0.230px;font-weight:bold;">2028</span><span class="t" style="left:1268.00px;top:344.00px;font-size:13px;line-height:17px;color:#3f3f3f;letter-spacing:-0.230px;font-weight:bold;">5361</span><span class="t" style="left:1314.00px;top:324.00px;font-size:13px;line-height:17px;color:#3f3f3f;letter-spacing:-0.230px;font-weight:bold;">2029</span><span class="t" style="left:1314.00px;top:344.00px;font-size:13px;line-height:17px;color:#3f3f3f;letter-spacing:-0.230px;font-weight:bold;">5381</span><span class="t" style="left:1360.00px;top:324.00px;font-size:13px;line-height:17px;color:#3f3f3f;letter-spacing:-0.230px;font-weight:bold;">2030</span><span class="t" style="left:1360.00px;top:344.00px;font-size:13px;line-height:17px;color:#3f3f3f;letter-spacing:-0.230px;font-weight:bold;">5401</span><span class="t" style="left:788.00px;top:344.00px;font-size:13px;line-height:17px;color:#3f3f3f;letter-spacing:-0.149px;font-weight:bold;">Średnia</span></div></div><div class="g" style="width:1780px;height:971px"><svg style="left:786px;top:380px" width="481" height="289" font-family="Liberation Sans,sans-serif"><rect x=".5" y=".5" width="480" height="288" fill="#fff" stroke="#d9d9d9"/><text x="79.6" y="30.0" font-size="17.8" fill="#505050" font-weight="bold" text-anchor="start" textLength="319.5" lengthAdjust="spacing">SREDNIA W KOLEJNYCH LATACH</text><rect x="219" y="54" width="7" height="7" fill="#4472c4"/><text x="229.0" y="59.8" font-size="11" fill="#595959" text-anchor="start" textLength="36.0" lengthAdjust="spacing">Średnia</text><g stroke="#d9d9d9" fill="none"><path d="M33.5 83.5V232.5"/><path d="M76.5 83.5V232.5"/><path d="M119.5 83.5V232.5"/><path d="M163.5 83.5V232.5"/><path d="M206.5 83.5V232.5"/><path d="M249.5 83.5V232.5"/><path d="M292.5 83.5V232.5"/><path d="M335.5 83.5V232.5"/><path d="M379.5 83.5V232.5"/><path d="M422.5 83.5V232.5"/><path d="M465.5 83.5V232.5"/><path d="M33.5 232.5H465.5"/></g><rect x="51" y="181" width="8" height="51" fill="#4472c4"/><text transform="translate(59.2 172.6) rotate(-90)" font-size="11.2" fill="#808080" textLength="56.4" lengthAdjust="spacingAndGlyphs">5220.821192</text><text x="42.0" y="250.2" font-size="10.5" fill="#595959" text-anchor="start" textLength="26.2" lengthAdjust="spacing">2021</text><rect x="94" y="173" width="8" height="59" fill="#4472c4"/><text transform="translate(102.4 164.0) rotate(-90)" font-size="11.2" fill="#808080" textLength="56.4" lengthAdjust="spacingAndGlyphs">5240.821192</text><text x="85.2" y="250.2" font-size="10.5" fill="#595959" text-anchor="start" textLength="26.2" lengthAdjust="spacing">2022</text><rect x="138" y="164" width="8" height="68" fill="#4472c4"/><text transform="translate(145.6 155.5) rotate(-90)" font-size="11.2" fill="#808080" textLength="56.4" lengthAdjust="spacingAndGlyphs">5260.821192</text><text x="128.4" y="250.2" font-size="10.5" fill="#595959" text-anchor="start" textLength="26.2" lengthAdjust="spacing">2023</text><rect x="181" y="155" width="8" height="77" fill="#4472c4"/><text transform="translate(188.8 146.9) rotate(-90)" font-size="11.2" fill="#808080" textLength="56.4" lengthAdjust="spacingAndGlyphs">5280.821192</text><text x="171.6" y="250.2" font-size="10.5" fill="#595959" text-anchor="start" textLength="26.2" lengthAdjust="spacing">2024</text><rect x="224" y="147" width="8" height="85" fill="#4472c4"/><text transform="translate(232.0 138.3) rotate(-90)" font-size="11.2" fill="#808080" textLength="56.4" lengthAdjust="spacingAndGlyphs">5300.821192</text><text x="214.8" y="250.2" font-size="10.5" fill="#595959" text-anchor="start" textLength="26.2" lengthAdjust="spacing">2025</text><rect x="267" y="138" width="8" height="94" fill="#4472c4"/><text transform="translate(275.2 129.8) rotate(-90)" font-size="11.2" fill="#808080" textLength="56.4" lengthAdjust="spacingAndGlyphs">5320.821192</text><text x="258.0" y="250.2" font-size="10.5" fill="#595959" text-anchor="start" textLength="26.2" lengthAdjust="spacing">2026</text><rect x="310" y="130" width="8" height="102" fill="#4472c4"/><text transform="translate(318.4 121.2) rotate(-90)" font-size="11.2" fill="#808080" textLength="56.4" lengthAdjust="spacingAndGlyphs">5340.821192</text><text x="301.2" y="250.2" font-size="10.5" fill="#595959" text-anchor="start" textLength="26.2" lengthAdjust="spacing">2027</text><rect x="354" y="121" width="8" height="111" fill="#4472c4"/><text transform="translate(361.6 112.6) rotate(-90)" font-size="11.2" fill="#808080" textLength="56.4" lengthAdjust="spacingAndGlyphs">5360.821192</text><text x="344.4" y="250.2" font-size="10.5" fill="#595959" text-anchor="start" textLength="26.2" lengthAdjust="spacing">2028</text><rect x="397" y="113" width="8" height="119" fill="#4472c4"/><text transform="translate(404.8 104.0) rotate(-90)" font-size="11.2" fill="#808080" textLength="56.4" lengthAdjust="spacingAndGlyphs">5380.821192</text><text x="387.6" y="250.2" font-size="10.5" fill="#595959" text-anchor="start" textLength="26.2" lengthAdjust="spacing">2029</text><rect x="440" y="104" width="8" height="128" fill="#4472c4"/><text transform="translate(448.0 95.5) rotate(-90)" font-size="11.2" fill="#808080" textLength="56.4" lengthAdjust="spacingAndGlyphs">5400.821192</text><text x="430.8" y="250.2" font-size="10.5" fill="#595959" text-anchor="start" textLength="26.2" lengthAdjust="spacing">2030</text><text x="237.4" y="268.2" font-size="11.8" fill="#595959" text-anchor="start" textLength="24.4" lengthAdjust="spacingAndGlyphs">LATA</text><text transform="translate(28.3 179.8) rotate(-90)" font-size="12.2" fill="#595959" textLength="42.8" lengthAdjust="spacingAndGlyphs">SREDNIA</text></svg><svg style="left:1296px;top:381px" width="481" height="289" font-family="Liberation Sans,sans-serif"><rect x=".5" y=".5" width="480" height="288" fill="#fff" stroke="#d9d9d9"/><text x="115.4" y="30.0" font-size="17.8" fill="#505050" font-weight="bold" text-anchor="start" textLength="248.2" lengthAdjust="spacing">WIELKOSC ZAMOWIENIA</text><g stroke="#d9d9d9" fill="none"><path d="M33.5 52.5V160.5"/><path d="M48.5 52.5V160.5"/><path d="M64.5 52.5V160.5"/><path d="M79.5 52.5V160.5"/><path d="M95.5 52.5V160.5"/><path d="M111.5 52.5V160.5"/><path d="M126.5 52.5V160.5"/><path d="M142.5 52.5V160.5"/><path d="M158.5 52.5V160.5"/><path d="M173.5 52.5V160.5"/><path d="M189.5 52.5V160.5"/><path d="M205.5 52.5V160.5"/><path d="M220.5 52.5V160.5"/><path d="M236.5 52.5V160.5"/><path d="M252.5 52.5V160.5"/><path d="M267.5 52.5V160.5"/><path d="M283.5 52.5V160.5"/><path d="M299.5 52.5V160.5"/><path d="M314.5 52.5V160.5"/><path d="M330.5 52.5V160.5"/><path d="M33 160.5H330.5999999999999"/></g><rect x="40" y="104" width="3" height="56" fill="#4472c4"/><text transform="translate(44.8 95.7) rotate(-90)" font-size="11.2" fill="#808080" textLength="21.2" lengthAdjust="spacingAndGlyphs">5190</text><text transform="translate(44.6 218.9) rotate(-90)" font-size="10.5" fill="#595959" textLength="50.6" lengthAdjust="spacing">GNIEZNO</text><rect x="55" y="113" width="3" height="47" fill="#4472c4"/><text transform="translate(60.5 104.0) rotate(-90)" font-size="11.2" fill="#808080" textLength="21.2" lengthAdjust="spacingAndGlyphs">4420</text><text transform="translate(60.3 224.0) rotate(-90)" font-size="10.5" fill="#595959" textLength="55.7" lengthAdjust="spacing">PRZEMYSL</text><rect x="71" y="146" width="3" height="14" fill="#4472c4"/><text transform="translate(76.2 137.7) rotate(-90)" font-size="11.2" fill="#808080" textLength="21.2" lengthAdjust="spacingAndGlyphs">1290</text><text transform="translate(76.0 252.7) rotate(-90)" font-size="10.5" fill="#595959" textLength="84.4" lengthAdjust="spacing">OGRODZIENIEC</text><rect x="87" y="68" width="3" height="92" fill="#4472c4"/><text transform="translate(91.8 59.7) rotate(-90)" font-size="11.2" fill="#808080" textLength="21.2" lengthAdjust="spacingAndGlyphs">8530</text><text transform="translate(91.6 224.0) rotate(-90)" font-size="10.5" fill="#595959" textLength="55.7" lengthAdjust="spacing">PRZEMYSL</text><rect x="102" y="96" width="3" height="64" fill="#4472c4"/><text transform="translate(107.5 86.9) rotate(-90)" font-size="11.2" fill="#808080" textLength="21.2" lengthAdjust="spacingAndGlyphs">6000</text><text transform="translate(107.3 218.9) rotate(-90)" font-size="10.5" fill="#595959" textLength="50.6" lengthAdjust="spacing">GNIEZNO</text><rect x="118" y="150" width="3" height="10" fill="#4472c4"/><text transform="translate(123.1 141.4) rotate(-90)" font-size="11.2" fill="#808080" textLength="15.9" lengthAdjust="spacingAndGlyphs">950</text><text transform="translate(122.9 221.0) rotate(-90)" font-size="10.5" fill="#595959" textLength="52.7" lengthAdjust="spacing">MALBORK</text><rect x="134" y="134" width="3" height="26" fill="#4472c4"/><text transform="translate(138.8 125.1) rotate(-90)" font-size="11.2" fill="#808080" textLength="21.2" lengthAdjust="spacingAndGlyphs">2460</text><text transform="translate(138.6 224.0) rotate(-90)" font-size="10.5" fill="#595959" textLength="55.7" lengthAdjust="spacing">PRZEMYSL</text><rect x="149" y="148" width="3" height="12" fill="#4472c4"/><text transform="translate(154.5 139.3) rotate(-90)" font-size="11.2" fill="#808080" textLength="21.2" lengthAdjust="spacingAndGlyphs">1140</text><text transform="translate(154.3 221.0) rotate(-90)" font-size="10.5" fill="#595959" textLength="52.7" lengthAdjust="spacing">MALBORK</text><rect x="165" y="75" width="3" height="85" fill="#4472c4"/><text transform="translate(170.1 66.2) rotate(-90)" font-size="11.2" fill="#808080" textLength="21.2" lengthAdjust="spacingAndGlyphs">7920</text><text transform="translate(169.9 224.0) rotate(-90)" font-size="10.5" fill="#595959" textLength="55.7" lengthAdjust="spacing">PRZEMYSL</text><rect x="181" y="79" width="3" height="81" fill="#4472c4"/><text transform="translate(185.8 70.6) rotate(-90)" font-size="11.2" fill="#808080" textLength="21.2" lengthAdjust="spacingAndGlyphs">7520</text><text transform="translate(185.6 218.9) rotate(-90)" font-size="10.5" fill="#595959" textLength="50.6" lengthAdjust="spacing">GNIEZNO</text><rect x="196" y="145" width="3" height="15" fill="#4472c4"/><text transform="translate(201.5 136.2) rotate(-90)" font-size="11.2" fill="#808080" textLength="21.2" lengthAdjust="spacingAndGlyphs">1430</text><text transform="translate(201.3 252.7) rotate(-90)" font-size="10.5" fill="#595959" textLength="84.4" lengthAdjust="spacing">OGRODZIENIEC</text><rect x="212" y="81" width="3" height="79" fill="#4472c4"/><text transform="translate(217.1 72.5) rotate(-90)" font-size="11.2" fill="#808080" textLength="21.2" lengthAdjust="spacingAndGlyphs">7340</text><text transform="translate(216.9 218.9) rotate(-90)" font-size="10.5" fill="#595959" textLength="50.6" lengthAdjust="spacing">GNIEZNO</text><rect x="228" y="101" width="3" height="59" fill="#4472c4"/><text transform="translate(232.8 91.9) rotate(-90)" font-size="11.2" fill="#808080" textLength="21.2" lengthAdjust="spacingAndGlyphs">5540</text><text transform="translate(232.6 252.7) rotate(-90)" font-size="10.5" fill="#595959" textLength="84.4" lengthAdjust="spacing">OGRODZIENIEC</text><rect x="243" y="144" width="3" height="16" fill="#4472c4"/><text transform="translate(248.5 135.4) rotate(-90)" font-size="11.2" fill="#808080" textLength="21.2" lengthAdjust="spacingAndGlyphs">1500</text><text transform="translate(248.3 221.0) rotate(-90)" font-size="10.5" fill="#595959" textLength="52.7" lengthAdjust="spacing">MALBORK</text><rect x="259" y="72" width="3" height="88" fill="#4472c4"/><text transform="translate(264.1 63.6) rotate(-90)" font-size="11.2" fill="#808080" textLength="21.2" lengthAdjust="spacingAndGlyphs">8170</text><text transform="translate(263.9 224.0) rotate(-90)" font-size="10.5" fill="#595959" textLength="55.7" lengthAdjust="spacing">PRZEMYSL</text><rect x="275" y="59" width="3" height="101" fill="#4472c4"/><text transform="translate(279.8 50.2) rotate(-90)" font-size="11.2" fill="#808080" textLength="21.2" lengthAdjust="spacingAndGlyphs">9410</text><text transform="translate(279.6 252.7) rotate(-90)" font-size="10.5" fill="#595959" textLength="84.4" lengthAdjust="spacing">OGRODZIENIEC</text><rect x="290" y="110" width="3" height="50" fill="#4472c4"/><text transform="translate(295.4 101.4) rotate(-90)" font-size="11.2" fill="#808080" textLength="21.2" lengthAdjust="spacingAndGlyphs">4660</text><text transform="translate(295.2 221.0) rotate(-90)" font-size="10.5" fill="#595959" textLength="52.7" lengthAdjust="spacing">MALBORK</text><rect x="306" y="88" width="3" height="72" fill="#4472c4"/><text transform="translate(311.1 78.7) rotate(-90)" font-size="11.2" fill="#808080" textLength="21.2" lengthAdjust="spacingAndGlyphs">6760</text><text transform="translate(310.9 224.0) rotate(-90)" font-size="10.5" fill="#595959" textLength="55.7" lengthAdjust="spacing">PRZEMYSL</text><rect x="322" y="136" width="3" height="24" fill="#4472c4"/><text transform="translate(326.8 127.5) rotate(-90)" font-size="11.2" fill="#808080" textLength="21.2" lengthAdjust="spacingAndGlyphs">2240</text><text transform="translate(326.6 252.7) rotate(-90)" font-size="10.5" fill="#595959" textLength="84.4" lengthAdjust="spacing">OGRODZIENIEC</text><text x="156.6" y="267.7" font-size="11.8" fill="#595959" text-anchor="start" textLength="50.0" lengthAdjust="spacingAndGlyphs">MAGAZYN</text><text transform="translate(28.7 178.0) rotate(-90)" font-size="12.2" fill="#595959" textLength="121.4" lengthAdjust="spacingAndGlyphs">WIELKOSC ZAMOWIENIA</text><rect x="351" y="160" width="7" height="6.5" fill="#4472c4"/><text x="360.8" y="166.3" font-size="11" fill="#595959" text-anchor="start" textLength="105.0" lengthAdjust="spacing">wielkosc_zamowienia</text></svg><svg style="left:787px;top:681px" width="481" height="289" font-family="Liberation Sans,sans-serif"><rect x=".5" y=".5" width="480" height="288" fill="#fff" stroke="#d9d9d9"/><text x="92.3" y="22.0" font-size="17.8" fill="#505050" font-weight="bold" text-anchor="start" textLength="305.0" lengthAdjust="spacing">SREDNIA ZAMOWIEN W MIES.</text><rect x="11" y="8.00" width="43" height="3.13" fill="#e2e2e2"/><rect x="11" y="10.83" width="43" height="3.13" fill="#dcdcdc"/><rect x="11" y="13.67" width="43" height="3.13" fill="#d6d6d6"/><rect x="11" y="16.50" width="43" height="3.13" fill="#d0d0d0"/><rect x="11" y="19.33" width="43" height="3.13" fill="#cacaca"/><rect x="11" y="22.17" width="43" height="3.13" fill="#c5c5c5"/><text x="14.5" y="20.6" font-size="11" fill="#000" text-anchor="start" textLength="36.0" lengthAdjust="spacing">Średnia</text><rect x="11" y="262.00" width="42" height="3.13" fill="#e2e2e2"/><rect x="11" y="264.83" width="42" height="3.13" fill="#dcdcdc"/><rect x="11" y="267.67" width="42" height="3.13" fill="#d6d6d6"/><rect x="11" y="270.50" width="42" height="3.13" fill="#d0d0d0"/><rect x="11" y="273.33" width="42" height="3.13" fill="#cacaca"/><rect x="11" y="276.17" width="42" height="3.13" fill="#c5c5c5"/><text x="14.5" y="275.0" font-size="11" fill="#000" text-anchor="start" textLength="21.5" lengthAdjust="spacing">data</text><path d="M40.39999999999998 269.20000000000005h7.2l-3.6 3.8z" fill="#333"/><g stroke="#d9d9d9" fill="none"><path d="M33.5 79.5V206.5"/><path d="M64.5 79.5V206.5"/><path d="M95.5 79.5V206.5"/><path d="M126.5 79.5V206.5"/><path d="M157.5 79.5V206.5"/><path d="M188.5 79.5V206.5"/><path d="M220.5 79.5V206.5"/><path d="M251.5 79.5V206.5"/><path d="M282.5 79.5V206.5"/><path d="M313.5 79.5V206.5"/><path d="M344.5 79.5V206.5"/><path d="M375.5 79.5V206.5"/><path d="M406.5 79.5V206.5"/><path d="M33.5 206.5H406.5"/></g><rect x="46" y="165" width="6" height="41" fill="#4472c4"/><text transform="translate(53.1 156.5) rotate(-90)" font-size="11.2" fill="#808080" textLength="56.4" lengthAdjust="spacingAndGlyphs">4855.873016</text><text x="38.8" y="223.2" font-size="10.3" fill="#595959" text-anchor="start" textLength="20.5" lengthAdjust="spacing">JAN</text><rect x="77" y="146" width="6" height="60" fill="#4472c4"/><text transform="translate(84.2 137.6) rotate(-90)" font-size="11.2" fill="#808080" textLength="56.4" lengthAdjust="spacingAndGlyphs">5070.357143</text><text x="70.1" y="223.2" font-size="10.3" fill="#595959" text-anchor="start" textLength="20.0" lengthAdjust="spacing">FEB</text><rect x="108" y="108" width="6" height="98" fill="#4472c4"/><text transform="translate(115.3 99.4) rotate(-90)" font-size="11.2" fill="#808080" textLength="56.4" lengthAdjust="spacingAndGlyphs">5484.333333</text><text x="99.0" y="223.2" font-size="10.3" fill="#595959" text-anchor="start" textLength="24.5" lengthAdjust="spacing">MAR</text><rect x="139" y="135" width="6" height="71" fill="#4472c4"/><text transform="translate(146.4 126.4) rotate(-90)" font-size="11.2" fill="#808080" textLength="56.4" lengthAdjust="spacingAndGlyphs">5184.761905</text><text x="131.5" y="223.2" font-size="10.3" fill="#595959" text-anchor="start" textLength="21.5" lengthAdjust="spacing">APR</text><rect x="170" y="94" width="6" height="112" fill="#4472c4"/><text transform="translate(177.5 85.6) rotate(-90)" font-size="11.2" fill="#808080" textLength="56.4" lengthAdjust="spacingAndGlyphs">5631.384615</text><text x="161.4" y="223.2" font-size="10.3" fill="#595959" text-anchor="start" textLength="24.0" lengthAdjust="spacing">MAY</text><rect x="201" y="113" width="6" height="93" fill="#4472c4"/><text transform="translate(208.6 104.5) rotate(-90)" font-size="11.2" fill="#808080" textLength="56.4" lengthAdjust="spacingAndGlyphs">5422.881356</text><text x="194.0" y="223.2" font-size="10.3" fill="#595959" text-anchor="start" textLength="21.0" lengthAdjust="spacing">JUN</text><rect x="233" y="137" width="6" height="69" fill="#4472c4"/><text transform="translate(239.6 128.4) rotate(-90)" font-size="11.2" fill="#808080" textLength="56.4" lengthAdjust="spacingAndGlyphs">5165.571429</text><text x="226.3" y="223.2" font-size="10.3" fill="#595959" text-anchor="start" textLength="18.5" lengthAdjust="spacing">JUL</text><rect x="264" y="95" width="6" height="111" fill="#4472c4"/><text transform="translate(270.7 86.4) rotate(-90)" font-size="11.2" fill="#808080" textLength="56.4" lengthAdjust="spacingAndGlyphs">5628.666667</text><text x="254.9" y="223.2" font-size="10.3" fill="#595959" text-anchor="start" textLength="23.5" lengthAdjust="spacing">AUG</text><rect x="295" y="135" width="6" height="71" fill="#4472c4"/><text transform="translate(301.8 126.4) rotate(-90)" font-size="11.2" fill="#808080" textLength="56.4" lengthAdjust="spacingAndGlyphs">5186.034483</text><text x="288.0" y="223.2" font-size="10.3" fill="#595959" text-anchor="start" textLength="19.5" lengthAdjust="spacing">SEP</text><rect x="326" y="143" width="6" height="63" fill="#4472c4"/><text transform="translate(332.9 134.4) rotate(-90)" font-size="11.2" fill="#808080" textLength="56.4" lengthAdjust="spacingAndGlyphs">5096.176471</text><text x="317.5" y="223.2" font-size="10.3" fill="#595959" text-anchor="start" textLength="22.5" lengthAdjust="spacing">OCT</text><rect x="357" y="139" width="6" height="67" fill="#4472c4"/><text transform="translate(364.0 130.4) rotate(-90)" font-size="11.2" fill="#808080" textLength="56.4" lengthAdjust="spacingAndGlyphs">5145.507246</text><text x="347.9" y="223.2" font-size="10.3" fill="#595959" text-anchor="start" textLength="24.0" lengthAdjust="spacing">NOV</text><rect x="388" y="168" width="6" height="38" fill="#4472c4"/><text transform="translate(395.1 159.4) rotate(-90)" font-size="11.2" fill="#808080" textLength="51.3" lengthAdjust="spacingAndGlyphs">4820.15625</text><text x="380.5" y="223.2" font-size="10.3" fill="#595959" text-anchor="start" textLength="21.0" lengthAdjust="spacing">DEC</text><text x="201.3" y="249.0" font-size="11.8" fill="#595959" text-anchor="start" textLength="41.1" lengthAdjust="spacingAndGlyphs">MIESIAC</text><text transform="translate(27.3 163.7) rotate(-90)" font-size="12.2" fill="#595959" textLength="42.8" lengthAdjust="spacingAndGlyphs">SREDNIA</text><rect x="428.29999999999995" y="160" width="7" height="7" fill="#4472c4"/><text x="437.5" y="167.2" font-size="11" fill="#595959" text-anchor="start" textLength="26.2" lengthAdjust="spacingAndGlyphs">Suma</text></svg><svg style="left:1298px;top:681px" width="481" height="289" font-family="Liberation Sans,sans-serif"><rect x=".5" y=".5" width="480" height="288" fill="#fff" stroke="#d9d9d9"/><text x="115.5" y="30.0" font-size="17.8" fill="#505050" font-weight="bold" text-anchor="start" textLength="248.2" lengthAdjust="spacing">WIELKOSC ZAMOWIENIA</text><g stroke="#d9d9d9" fill="none"><path d="M33.5 52.5V160.5"/><path d="M49.5 52.5V160.5"/><path d="M64.5 52.5V160.5"/><path d="M80.5 52.5V160.5"/><path d="M96.5 52.5V160.5"/><path d="M112.5 52.5V160.5"/><path d="M128.5 52.5V160.5"/><path d="M143.5 52.5V160.5"/><path d="M159.5 52.5V160.5"/><path d="M175.5 52.5V160.5"/><path d="M191.5 52.5V160.5"/><path d="M207.5 52.5V160.5"/><path d="M222.5 52.5V160.5"/><path d="M238.5 52.5V160.5"/><path d="M254.5 52.5V160.5"/><path d="M270.5 52.5V160.5"/><path d="M286.5 52.5V160.5"/><path d="M301.5 52.5V160.5"/><path d="M317.5 52.5V160.5"/><path d="M333.5 52.5V160.5"/><path d="M33.200000000000045 160.5H333.5999999999999"/></g><rect x="40" y="104" width="3" height="56" fill="#4472c4"/><text transform="translate(45.1 95.7) rotate(-90)" font-size="11.2" fill="#808080" textLength="21.2" lengthAdjust="spacingAndGlyphs">5190</text><text transform="translate(44.9 218.9) rotate(-90)" font-size="10.5" fill="#595959" textLength="50.6" lengthAdjust="spacing">GNIEZNO</text><rect x="56" y="113" width="3" height="47" fill="#4472c4"/><text transform="translate(60.9 104.0) rotate(-90)" font-size="11.2" fill="#808080" textLength="21.2" lengthAdjust="spacingAndGlyphs">4420</text><text transform="translate(60.7 224.0) rotate(-90)" font-size="10.5" fill="#595959" textLength="55.7" lengthAdjust="spacing">PRZEMYSL</text><rect x="72" y="146" width="3" height="14" fill="#4472c4"/><text transform="translate(76.7 137.7) rotate(-90)" font-size="11.2" fill="#808080" textLength="21.2" lengthAdjust="spacingAndGlyphs">1290</text><text transform="translate(76.5 252.7) rotate(-90)" font-size="10.5" fill="#595959" textLength="84.4" lengthAdjust="spacing">OGRODZIENIEC</text><rect x="88" y="68" width="3" height="92" fill="#4472c4"/><text transform="translate(92.5 59.7) rotate(-90)" font-size="11.2" fill="#808080" textLength="21.2" lengthAdjust="spacingAndGlyphs">8530</text><text transform="translate(92.3 224.0) rotate(-90)" font-size="10.5" fill="#595959" textLength="55.7" lengthAdjust="spacing">PRZEMYSL</text><rect x="103" y="96" width="3" height="64" fill="#4472c4"/><text transform="translate(108.3 86.9) rotate(-90)" font-size="11.2" fill="#808080" textLength="21.2" lengthAdjust="spacingAndGlyphs">6000</text><text transform="translate(108.1 218.9) rotate(-90)" font-size="10.5" fill="#595959" textLength="50.6" lengthAdjust="spacing">GNIEZNO</text><rect x="119" y="150" width="3" height="10" fill="#4472c4"/><text transform="translate(124.2 141.4) rotate(-90)" font-size="11.2" fill="#808080" textLength="15.9" lengthAdjust="spacingAndGlyphs">950</text><text transform="translate(124.0 221.0) rotate(-90)" font-size="10.5" fill="#595959" textLength="52.7" lengthAdjust="spacing">MALBORK</text><rect x="135" y="134" width="3" height="26" fill="#4472c4"/><text transform="translate(140.0 125.1) rotate(-90)" font-size="11.2" fill="#808080" textLength="21.2" lengthAdjust="spacingAndGlyphs">2460</text><text transform="translate(139.8 224.0) rotate(-90)" font-size="10.5" fill="#595959" textLength="55.7" lengthAdjust="spacing">PRZEMYSL</text><rect x="151" y="148" width="3" height="12" fill="#4472c4"/><text transform="translate(155.8 139.3) rotate(-90)" font-size="11.2" fill="#808080" textLength="21.2" lengthAdjust="spacingAndGlyphs">1140</text><text transform="translate(155.6 221.0) rotate(-90)" font-size="10.5" fill="#595959" textLength="52.7" lengthAdjust="spacing">MALBORK</text><rect x="167" y="75" width="3" height="85" fill="#4472c4"/><text transform="translate(171.6 66.2) rotate(-90)" font-size="11.2" fill="#808080" textLength="21.2" lengthAdjust="spacingAndGlyphs">7920</text><text transform="translate(171.4 224.0) rotate(-90)" font-size="10.5" fill="#595959" textLength="55.7" lengthAdjust="spacing">PRZEMYSL</text><rect x="182" y="79" width="3" height="81" fill="#4472c4"/><text transform="translate(187.4 70.6) rotate(-90)" font-size="11.2" fill="#808080" textLength="21.2" lengthAdjust="spacingAndGlyphs">7520</text><text transform="translate(187.2 218.9) rotate(-90)" font-size="10.5" fill="#595959" textLength="50.6" lengthAdjust="spacing">GNIEZNO</text><rect x="198" y="145" width="3" height="15" fill="#4472c4"/><text transform="translate(203.2 136.2) rotate(-90)" font-size="11.2" fill="#808080" textLength="21.2" lengthAdjust="spacingAndGlyphs">1430</text><text transform="translate(203.0 252.7) rotate(-90)" font-size="10.5" fill="#595959" textLength="84.4" lengthAdjust="spacing">OGRODZIENIEC</text><rect x="214" y="81" width="3" height="79" fill="#4472c4"/><text transform="translate(219.0 72.5) rotate(-90)" font-size="11.2" fill="#808080" textLength="21.2" lengthAdjust="spacingAndGlyphs">7340</text><text transform="translate(218.8 218.9) rotate(-90)" font-size="10.5" fill="#595959" textLength="50.6" lengthAdjust="spacing">GNIEZNO</text><rect x="230" y="101" width="3" height="59" fill="#4472c4"/><text transform="translate(234.8 91.9) rotate(-90)" font-size="11.2" fill="#808080" textLength="21.2" lengthAdjust="spacingAndGlyphs">5540</text><text transform="translate(234.6 252.7) rotate(-90)" font-size="10.5" fill="#595959" textLength="84.4" lengthAdjust="spacing">OGRODZIENIEC</text><rect x="246" y="144" width="3" height="16" fill="#4472c4"/><text transform="translate(250.6 135.4) rotate(-90)" font-size="11.2" fill="#808080" textLength="21.2" lengthAdjust="spacingAndGlyphs">1500</text><text transform="translate(250.4 221.0) rotate(-90)" font-size="10.5" fill="#595959" textLength="52.7" lengthAdjust="spacing">MALBORK</text><rect x="261" y="72" width="3" height="88" fill="#4472c4"/><text transform="translate(266.5 63.6) rotate(-90)" font-size="11.2" fill="#808080" textLength="21.2" lengthAdjust="spacingAndGlyphs">8170</text><text transform="translate(266.3 224.0) rotate(-90)" font-size="10.5" fill="#595959" textLength="55.7" lengthAdjust="spacing">PRZEMYSL</text><rect x="277" y="59" width="3" height="101" fill="#4472c4"/><text transform="translate(282.3 50.2) rotate(-90)" font-size="11.2" fill="#808080" textLength="21.2" lengthAdjust="spacingAndGlyphs">9410</text><text transform="translate(282.1 252.7) rotate(-90)" font-size="10.5" fill="#595959" textLength="84.4" lengthAdjust="spacing">OGRODZIENIEC</text><rect x="293" y="110" width="3" height="50" fill="#4472c4"/><text transform="translate(298.1 101.4) rotate(-90)" font-size="11.2" fill="#808080" textLength="21.2" lengthAdjust="spacingAndGlyphs">4660</text><text transform="translate(297.9 221.0) rotate(-90)" font-size="10.5" fill="#595959" textLength="52.7" lengthAdjust="spacing">MALBORK</text><rect x="309" y="88" width="3" height="72" fill="#4472c4"/><text transform="translate(313.9 78.7) rotate(-90)" font-size="11.2" fill="#808080" textLength="21.2" lengthAdjust="spacingAndGlyphs">6760</text><text transform="translate(313.7 224.0) rotate(-90)" font-size="10.5" fill="#595959" textLength="55.7" lengthAdjust="spacing">PRZEMYSL</text><rect x="325" y="136" width="3" height="24" fill="#4472c4"/><text transform="translate(329.7 127.5) rotate(-90)" font-size="11.2" fill="#808080" textLength="21.2" lengthAdjust="spacingAndGlyphs">2240</text><text transform="translate(329.5 252.7) rotate(-90)" font-size="10.5" fill="#595959" textLength="84.4" lengthAdjust="spacing">OGRODZIENIEC</text><text x="158.0" y="267.7" font-size="11.8" fill="#595959" text-anchor="start" textLength="50.0" lengthAdjust="spacingAndGlyphs">MAGAZYN</text><text transform="translate(28.7 178.0) rotate(-90)" font-size="12.2" fill="#595959" textLength="121.4" lengthAdjust="spacingAndGlyphs">WIELKOSC ZAMOWIENIA</text><rect x="354" y="160" width="7" height="6.5" fill="#4472c4"/><text x="363.8" y="166.3" font-size="11" fill="#595959" text-anchor="start" textLength="102.0" lengthAdjust="spacing">wielkosc zamowienia</text></svg></div><div class="g"><div style="left:1805px;top:242px;width:22px;height:786px;background:#666666;"></div><div style="left:1809px;top:296px;width:15px;height:718.5px;background:#444;"></div><svg style="left:1806px;top:242px;" width="21" height="786" viewBox="1806 242 21 786"><rect x="1810" y="245" width="13" height="13" fill="#d0d0d0"/><path d="M1813 253.3l3.5-4 3.5 4z" fill="#262626"/><rect x="1810" y="260" width="13" height="35" fill="#d0d0d0"/><rect x="1810" y="1015.2" width="13" height="12.800" fill="#d0d0d0"/><path d="M1813 1019.600l3.500 4 3.500-4z" fill="#262626"/></svg><div style="left:0px;top:1028px;width:1827px;height:28px;background:#666666;"></div><div style="left:0px;top:1028px;width:1805px;height:1px;background:#9b9b9b;"></div><div style="left:0px;top:1056px;width:1827px;height:1px;background:#4d4d4d;"></div><div style="left:0px;top:1057px;width:1827px;height:22px;background:#666666;"></div><div style="left:100px;top:1028px;width:71px;height:23px;background:#fff;"></div><div style="left:100px;top:1050px;width:71px;height:2px;background:#217346;"></div><svg style="left:0px;top:1028px;" width="1827" height="51" viewBox="0 1028 1827 51"><path d="M32.2 1037.8l-4.4 3.8 4.4 3.8z" fill="#8a8a8a"/><path d="M56 1037.8l4.4 3.8-4.400 3.800z" fill="#8a8a8a"/><circle cx="212.8" cy="1041.8" r="7.6" fill="none" stroke="#fff" stroke-width="1.3"/><path d="M208.5 1041.8h8.6M212.8 1037.5v8.6" stroke="#fff" stroke-width="1.5"/><rect x="1096" y="1037" width="2" height="2" fill="#f2f2f2"/><rect x="1096" y="1041" width="2" height="2" fill="#f2f2f2"/><rect x="1096" y="1045" width="2" height="2" fill="#f2f2f2"/><rect x="1113.200" y="1035.800" width="14.400" height="13.400" fill="#c8c8c8"/><path d="M1122.500 1038.400l-4.200 4.200 4.200 4.200z" fill="#1a1a1a"/><rect x="1128" y="1035.5" width="663.500" height="14" fill="#444"/><rect x="1128.6" y="1036" width="617" height="13" fill="#cdcdcd"/><rect x="1792" y="1035.800" width="13.200" height="13.400" fill="#c8c8c8"/><path d="M1796.800 1038.400l4.200 4.200-4.200 4.200z" fill="#1a1a1a"/><rect x="1527.5" y="1057" width="39.5" height="22" fill="#444"/><g fill="none" stroke="#fff" stroke-width="1.1"><rect x="1540.5" y="1060.5" width="12.5" height="12.5"/><path d="M1544.7 1060.5v12.5M1548.9 1060.5v12.5M1540.5 1064.7h12.5M1540.5 1068.9h12.5"/><rect x="1580.5" y="1060.5" width="13" height="12.5"/><rect x="1583.5" y="1063.5" width="7" height="6.5"/><path d="M1585 1065.7h4M1585 1067.9h4" stroke-width=".8"/><rect x="1620.5" y="1060.5" width="13" height="12.5"/><path d="M1624.5 1060.5v7.5h5v-7.5"/></g><rect x="1621" y="1061" width="3.4" height="6.8" fill="#fff"/><rect x="1629.6" y="1061" width="3.4" height="6.8" fill="#fff"/><path d="M1653 1067.5h8M1770.5 1067.5h8M1774.5 1063.5v8" stroke="#fff" stroke-width="1.1"/><path d="M1666 1067.5h100" stroke="#d0d0d0" stroke-width="1"/><rect x="1714" y="1061" width="4" height="13" fill="#fff"/><g fill="none" stroke="#fff" stroke-width="1.1"><path d="M73 1062.6a5 5 0 1 0 3.5 8.6"/><circle cx="75.5" cy="1063" r="1.1"/><path d="M72.5 1065.8h6M75.5 1065.8v3l-1.8 3M75.5 1068.8l1.5 2"/><path d="M77 1069l5 5M82 1069l-5 5" stroke-width="1.4"/></g></svg><span class="t" style="left:112.30px;top:1033.00px;font-size:13px;line-height:17px;color:#1e6e42;letter-spacing:-0.554px;font-weight:bold;">Arkusz1</span><span class="t" style="left:7.40px;top:1059.50px;font-size:12px;line-height:16px;color:#fff;letter-spacing:-0.147px;">Gotowy</span><span class="t" style="left:85.40px;top:1059.50px;font-size:12px;line-height:16px;color:#fff;letter-spacing:-0.093px;">Ułatwienia dostępu: zbadaj</span><span class="t" style="left:1792.00px;top:1059.50px;font-size:12px;line-height:16px;color:#fff;letter-spacing:-1.048px;">100%</span></div>
</body></html>
